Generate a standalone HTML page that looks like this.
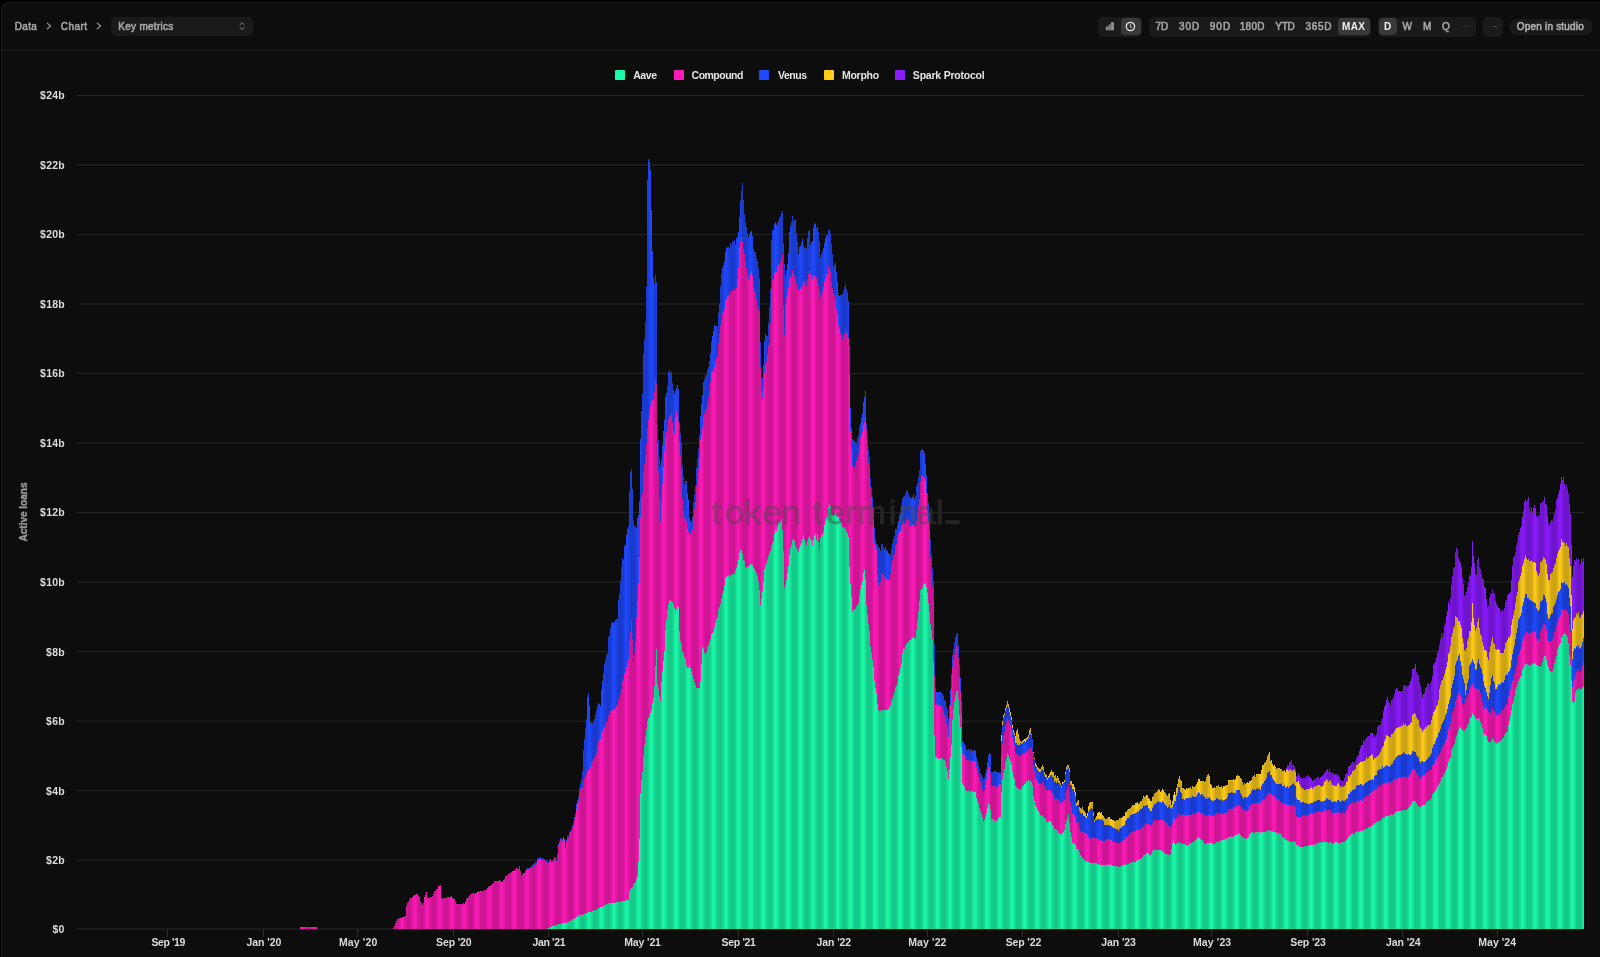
<!DOCTYPE html>
<html lang="en"><head><meta charset="utf-8"><title>Active loans</title>
<style>
html,body{margin:0;padding:0;background:#000;}
body{width:1600px;height:957px;overflow:hidden;position:relative;font-family:"Liberation Sans",sans-serif;}
#root{position:absolute;left:0;top:0;width:1600px;height:957px;will-change:transform;overflow:hidden;}
.panel{position:absolute;left:1px;top:2px;width:1600px;height:960px;background:#0d0d0d;border-top:1px solid #161616;border-left:1px solid #1e1e1e;border-top-left-radius:7px;box-sizing:border-box;}
.hdr{position:absolute;left:2px;top:50px;width:1598px;height:1px;background:#1c1c1c;}
.t{position:absolute;white-space:pre;line-height:20px;font-family:"Liberation Sans",sans-serif;}
.box{position:absolute;background:#1a1a1c;border-radius:5px;top:16.5px;height:20px;}
.sel{position:absolute;background:#393939;border-radius:4px;top:18px;height:16.75px;}
.dots{position:absolute;width:1.7px;height:1.7px;border-radius:1px;}
.lg{position:absolute;top:69.8px;width:10.2px;height:10.2px;border-radius:1px;}
svg text{font-family:"Liberation Sans",sans-serif;}
</style></head><body><div id="root">
<div class="panel"></div>
<div class="hdr"></div>
<svg style="position:absolute;left:44px;top:20px" width="10" height="12" viewBox="0 0 10 12"><path d="M3 2.8 L6.6 6 L3 9.2" fill="none" stroke="#a3a3a3" stroke-width="1.1"/></svg>
<svg style="position:absolute;left:94px;top:20px" width="10" height="12" viewBox="0 0 10 12"><path d="M3 2.8 L6.6 6 L3 9.2" fill="none" stroke="#a3a3a3" stroke-width="1.1"/></svg>
<div class="box" style="left:111px;width:142px;height:19.3px;background:#1a1a1a;"></div>
<svg style="position:absolute;left:237px;top:20px" width="10" height="12" viewBox="0 0 10 12"><path d="M2.7 5 L5.1 2.7 L7.5 5 M2.7 7.2 L5.1 9.5 L7.5 7.2" fill="none" stroke="#8a8a8a" stroke-width="1"/></svg>

<div class="box" style="left:1098px;width:44px;"></div>
<div class="sel" style="left:1121px;width:19.7px;"></div>
<svg style="position:absolute;left:1104px;top:20px" width="12" height="12" viewBox="0 0 12 12"><path d="M1.8 9.8 V6.6 H4.2 V9.8 Z M4.6 9.8 V4.6 H6.6 V9.8 Z M6.9 9.8 V2.8 Q6.9 2 7.7 2 H9.2 Q10 2 10 2.8 V9.8 Z M1.6 9.4 H10.1 V10.3 H1.6 Z" fill="#8c8c8c"/></svg>
<svg style="position:absolute;left:1125.1px;top:20.85px" width="11" height="11" viewBox="0 0 11 11"><circle cx="5.5" cy="5.5" r="4.2" fill="none" stroke="#e6e6e6" stroke-width="1.2"/><path d="M5.5 3 V5.7 L7.2 6.9" fill="none" stroke="#a8a8a8" stroke-width="1.1"/></svg>
<div class="box" style="left:1149px;width:222px;"></div>
<div class="sel" style="left:1338px;width:31.75px;"></div>
<div class="box" style="left:1378px;width:98px;"></div>
<div class="sel" style="left:1379.25px;width:17.75px;"></div>
<div class="box" style="left:1483px;width:19.5px;"></div>
<div class="box" style="left:1509.5px;top:18.7px;width:82.5px;height:16.3px;border-radius:6px;background:#1a1a1a;"></div>
<i class="dots" style="left:1461px;top:25.5px;background:#3a3a3a"></i><i class="dots" style="left:1464.2px;top:25.5px;background:#3a3a3a"></i><i class="dots" style="left:1467.4px;top:25.5px;background:#3a3a3a"></i>
<i class="dots" style="left:1488.5px;top:25.5px;background:#555"></i><i class="dots" style="left:1491.7px;top:25.5px;background:#555"></i><i class="dots" style="left:1494.9px;top:25.5px;background:#555"></i>

<div class="lg" style="left:614.5px;background:#1afcaa;"></div>
<div class="lg" style="left:673.5px;background:#ff1ab8;"></div>
<div class="lg" style="left:759.3px;background:#1f49ff;"></div>
<div class="lg" style="left:823.6px;background:#ffcc1a;"></div>
<div class="lg" style="left:895px;background:#8a1aff;"></div>

<svg style="position:absolute;left:0;top:0" width="1600" height="957" viewBox="0 0 1600 957">
 <defs>
  <linearGradient id="sg" x1="0" x2="1" y1="0" y2="0">
   <stop offset="0" stop-color="#000" stop-opacity="0"/>
   <stop offset="0.06" stop-color="#000" stop-opacity="0.02"/>
   <stop offset="0.36" stop-color="#000" stop-opacity="0.2"/>
   <stop offset="0.70" stop-color="#000" stop-opacity="0.2"/>
   <stop offset="0.95" stop-color="#000" stop-opacity="0.02"/>
   <stop offset="1" stop-color="#000" stop-opacity="0"/>
  </linearGradient>
  <pattern id="stripes" x="601.300" y="0" width="12.449" height="957" patternUnits="userSpaceOnUse">
   <rect x="0" y="0" width="12.449" height="957" fill="url(#sg)"/>
  </pattern>
  <clipPath id="cp"><path d="M299.50 929.0V927.9H300.28V927.3H317.44V928.6H318.22V929.0ZM392.31 929.0V928.9H393.09V927.8H393.87V926.2H394.65V924.5H395.43V922.7H396.21V920.7H396.99V918.7H397.77V918.9H399.33V918.1H400.11V917.7H401.67V917.9H402.45V916.9H403.23V917.1H404.01V916.6H404.79V915.6H405.57V910.9H406.35V906.0H407.13V903.0H407.91V901.7H408.69V901.6H409.47V900.1H410.25V898.2H411.03V897.9H411.81V897.2H412.59V896.0H413.37V895.5H414.15V895.0H414.93V894.7H415.71V894.3H416.49V894.2H417.27V894.0H418.05V895.6H418.83V897.4H419.61V899.2H420.39V900.5H421.17V902.6H421.95V904.5H422.73V902.6H423.51V900.0H424.29V897.2H425.07V894.8H425.85V891.7H426.63V895.7H427.41V898.5H428.19V898.4H428.97V897.7H429.75V897.4H430.53V897.1H431.31V896.9H432.09V896.3H432.87V894.3H433.65V892.9H434.43V891.6H435.21V891.2H435.99V889.3H436.77V889.0H437.55V887.4H438.33V886.2H439.11V885.5H439.89V884.6H440.67V895.7H441.45V898.2H442.23V898.8H443.01V898.3H443.79V898.4H444.57V898.1H445.35V898.0H446.91V897.4H448.47V896.9H449.25V896.8H450.03V897.1H450.81V896.4H451.59V897.1H452.37V898.1H453.14V898.5H453.92V899.1H454.70V900.8H455.48V901.8H456.26V903.6H457.04V904.2H457.82V904.4H458.60V904.9H459.38V904.0H460.16V903.9H460.94V904.2H461.72V904.1H462.50V904.2H463.28V903.4H464.06V903.6H464.84V902.3H465.62V900.1H466.40V899.2H467.18V897.8H467.96V897.0H468.74V896.4H469.52V895.1H470.30V894.2H471.08V894.0H471.86V893.0H472.64V892.7H473.42V892.9H474.20V893.9H474.98V893.4H475.76V893.3H476.54V891.8H477.32V891.6H478.10V891.3H478.88V891.8H479.66V892.0H480.44V891.4H481.22V891.2H482.00V891.4H482.78V890.9H483.56V890.6H484.34V890.4H485.90V890.2H486.68V888.7H487.46V887.7H488.24V887.0H489.02V886.4H489.80V886.0H490.58V884.9H491.36V884.6H492.14V883.7H492.92V883.2H493.70V882.0H494.48V881.0H495.26V880.9H496.04V880.8H497.60V880.3H498.38V880.7H499.16V880.4H499.94V881.2H500.72V881.5H501.50V882.1H502.28V881.6H503.06V879.6H503.84V878.9H504.62V877.5H505.40V876.4H506.18V875.7H506.96V875.0H507.74V874.2H508.52V873.5H509.30V873.1H510.08V872.7H510.86V872.4H511.64V872.2H512.42V871.3H513.20V871.0H513.98V869.7H514.76V870.9H515.54V869.9H516.32V868.4H517.10V869.0H517.88V868.6H518.66V867.1H519.44V865.7H520.22V870.9H521.00V875.5H521.78V875.3H522.56V874.9H523.34V872.6H524.12V873.2H524.90V870.7H525.68V869.8H526.46V868.6H527.24V868.0H528.02V867.6H528.80V867.7H529.58V868.2H530.36V866.6H531.13V866.1H531.91V865.2H532.69V864.9H533.47V863.8H534.25V863.2H535.03V862.1H535.81V861.8H536.59V859.9H537.37V858.7H538.15V858.3H538.93V857.9H539.71V858.0H540.49V857.0H541.27V858.7H542.05V857.8H542.83V858.7H543.61V858.4H544.39V858.6H545.17V860.0H545.95V860.2H546.73V861.1H547.51V860.4H548.29V861.7H549.07V860.2H549.85V858.7H550.63V864.4H551.41V861.7H552.19V860.7H552.97V859.0H553.75V856.9H554.53V855.8H555.31V857.1H556.09V859.5H556.87V853.4H557.65V848.5H558.43V843.9H559.21V841.3H559.99V838.3H560.77V838.1H561.55V839.4H562.33V838.9H563.11V836.8H563.89V838.7H564.67V843.2H565.45V848.2H566.23V839.5H567.01V836.4H567.79V835.7H568.57V834.0H569.35V831.8H570.13V830.0H570.91V829.7H571.69V828.8H572.47V825.0H573.25V822.6H574.03V817.0H574.81V813.4H575.59V809.7H576.37V803.7H577.15V799.6H577.93V796.7H578.71V791.3H579.49V787.8H580.27V782.9H581.05V779.1H581.83V771.2H582.61V760.3H583.39V749.9H584.17V739.2H584.95V727.8H585.73V718.6H586.51V708.3H587.29V697.2H588.07V692.7H588.85V706.3H589.63V719.4H590.41V723.2H591.19V721.7H591.97V723.7H592.75V721.3H593.53V723.1H594.31V718.6H595.09V713.6H595.87V709.6H596.65V706.7H597.43V706.4H598.21V702.8H598.99V703.9H599.77V705.5H600.55V695.9H601.33V689.5H602.11V680.7H602.89V673.1H603.67V669.1H604.45V663.8H605.23V660.2H606.01V655.3H606.79V653.0H607.57V647.0H608.35V637.2H609.12V634.8H609.90V628.2H610.68V626.3H611.46V623.0H612.24V621.8H613.02V623.4H613.80V622.0H614.58V619.9H615.36V619.8H616.14V619.4H616.92V618.5H617.70V612.6H618.48V600.2H619.26V594.3H620.04V581.3H620.82V566.6H621.60V564.6H622.38V557.7H623.16V559.7H623.94V546.2H624.72V544.9H625.50V540.9H626.28V534.5H627.06V528.6H627.84V526.1H628.62V506.1H629.40V491.7H630.18V471.9H630.96V468.5H631.74V488.9H632.52V508.0H633.30V521.1H634.08V526.2H634.86V526.8H635.64V530.7H636.42V527.7H637.20V518.0H637.98V515.1H638.76V500.5H639.54V465.9H640.32V439.2H641.10V410.6H641.88V393.9H642.66V369.9H643.44V353.5H644.22V338.5H645.00V321.8H645.78V285.8H646.56V228.4H647.34V180.3H648.12V159.2H648.90V161.9H649.68V169.3H650.46V170.2H651.24V209.8H652.02V250.9H652.80V278.0H653.58V290.7H654.36V284.3H655.14V274.7H655.92V281.7H656.70V325.5H657.48V425.8H658.26V440.0H659.04V457.0H659.82V465.7H660.60V474.8H661.38V459.6H662.16V445.0H662.94V431.1H663.72V419.7H664.50V406.7H665.28V396.9H666.06V392.6H666.84V385.7H667.62V376.1H668.40V372.4H669.18V370.3H669.96V373.1H670.74V372.4H671.52V375.0H672.30V382.8H673.08V389.7H673.86V394.3H674.64V393.1H675.42V390.6H676.20V388.4H676.98V384.6H677.76V389.1H678.54V406.1H679.32V423.1H680.10V433.4H680.88V442.7H681.66V450.4H682.44V464.8H683.22V477.0H684.00V483.5H684.78V481.2H685.56V482.0H686.34V481.4H687.12V493.3H687.89V500.3H688.67V509.9H689.45V517.5H690.23V522.3H691.01V520.8H691.79V516.6H692.57V512.1H693.35V501.9H694.13V494.1H694.91V486.0H695.69V475.6H696.47V468.3H697.25V458.6H698.03V448.7H698.81V435.5H699.59V426.7H700.37V415.6H701.15V404.4H701.93V395.4H702.71V386.1H703.49V381.9H704.27V378.5H705.05V374.9H705.83V374.6H706.61V372.2H707.39V370.2H708.17V367.1H708.95V360.8H709.73V353.3H710.51V348.2H711.29V342.4H712.07V335.6H712.85V331.2H713.63V324.6H714.41V325.4H715.19V325.8H715.97V326.2H716.75V327.2H717.53V319.1H718.31V313.3H719.09V303.6H719.87V285.7H720.65V275.5H721.43V274.0H722.21V268.3H722.99V265.3H723.77V261.4H724.55V255.2H725.33V252.3H726.11V248.2H726.89V247.2H727.67V249.0H728.45V246.5H729.23V248.2H730.01V243.3H730.79V244.7H731.57V241.3H732.35V241.0H733.13V242.3H733.91V240.3H734.69V243.2H735.47V243.6H736.25V238.1H737.03V237.3H737.81V231.5H738.59V227.4H739.37V216.5H740.15V201.4H740.93V191.1H741.71V179.7H742.49V182.7H743.27V200.4H744.05V214.1H744.83V221.8H745.61V226.1H746.39V226.5H747.17V233.7H747.95V237.5H748.73V233.6H749.51V230.9H750.29V231.9H751.07V230.8H751.85V235.6H752.63V243.0H753.41V248.9H754.19V251.9H755.75V258.2H756.53V256.7H757.31V260.9H758.09V268.0H758.87V277.5H759.65V290.9H760.43V342.1H761.21V377.4H761.99V377.6H762.77V364.7H763.55V344.4H764.33V340.9H765.10V334.4H765.88V336.1H766.66V333.0H767.44V335.7H768.22V322.6H769.00V306.8H769.78V288.6H770.56V269.8H771.34V239.5H772.12V229.5H772.90V229.6H773.68V227.2H774.46V223.9H775.24V222.4H776.02V224.8H776.80V222.5H777.58V222.0H778.36V221.1H779.14V218.2H779.92V216.3H780.70V214.2H781.48V212.9H782.26V210.7H783.04V243.1H783.82V263.9H784.60V279.9H785.38V276.3H786.16V269.7H786.94V263.7H787.72V253.3H788.50V245.6H789.28V232.3H790.06V226.2H790.84V221.9H791.62V217.6H792.40V215.8H793.18V222.3H793.96V220.0H794.74V220.1H795.52V228.1H796.30V233.0H797.08V242.2H797.86V254.2H798.64V250.0H799.42V246.7H800.20V245.6H800.98V241.9H801.76V239.2H802.54V243.0H803.32V245.1H804.10V247.5H804.88V247.4H805.66V247.0H806.44V249.0H807.22V238.2H808.00V231.2H808.78V229.7H809.56V236.6H810.34V245.3H811.12V242.1H811.90V240.8H812.68V234.6H813.46V227.6H814.24V222.7H815.02V224.3H815.80V228.3H816.58V229.3H817.36V226.9H818.14V232.3H818.92V241.6H819.70V251.3H820.48V257.9H821.26V254.2H822.04V251.1H822.82V247.9H823.60V242.6H824.38V243.4H825.16V238.4H825.94V234.7H826.72V235.0H827.50V233.3H828.28V230.1H829.06V230.4H829.84V234.3H830.62V239.2H831.40V243.5H832.18V254.0H832.96V265.6H833.74V265.2H834.52V265.8H835.30V262.9H836.08V272.4H836.86V282.3H837.64V295.3H838.42V295.1H839.20V295.6H839.98V294.5H840.76V294.9H841.54V292.9H842.32V294.4H843.09V291.3H843.87V287.4H844.65V282.9H845.43V283.6H846.21V288.7H846.99V291.5H847.77V301.3H848.55V319.3H849.33V346.1H850.11V408.4H850.89V427.7H851.67V441.3H852.45V438.9H853.23V440.2H854.01V441.1H854.79V442.3H855.57V441.7H856.35V442.9H857.13V438.4H857.91V435.3H858.69V430.1H859.47V427.1H860.25V422.9H861.03V418.0H861.81V413.0H862.59V406.0H863.37V402.3H864.15V397.3H864.93V391.3H865.71V406.0H866.49V424.0H867.27V438.3H868.05V449.9H868.83V457.3H869.61V469.4H870.39V477.5H871.17V487.0H871.95V496.8H872.73V508.3H873.51V517.8H874.29V528.2H875.07V539.1H875.85V543.8H876.63V542.9H877.41V545.3H878.19V546.8H878.97V548.1H879.75V551.3H880.53V545.4H881.31V544.1H882.09V543.6H882.87V546.5H883.65V546.4H884.43V548.5H885.21V547.2H885.99V550.3H886.77V551.2H887.55V549.5H888.33V552.5H889.11V553.7H889.89V555.1H890.67V554.8H891.45V549.2H892.23V543.0H893.01V538.5H893.79V536.2H894.57V533.1H895.35V529.0H896.13V528.6H896.91V524.8H897.69V528.7H898.47V520.6H899.25V516.4H900.03V513.2H900.81V505.9H901.59V500.7H902.37V498.7H903.15V496.9H903.93V495.9H904.71V491.8H905.49V492.5H906.27V491.0H907.05V490.3H907.83V493.5H908.61V495.2H909.39V495.7H910.17V498.1H911.73V497.2H912.51V496.4H913.29V495.3H914.07V499.0H914.85V496.1H915.63V492.1H916.41V486.3H917.19V482.6H917.97V476.5H918.75V469.5H919.53V459.2H920.31V450.6H921.08V449.4H921.86V449.7H922.64V449.6H923.42V449.7H924.20V453.3H924.98V463.6H925.76V476.2H926.54V483.5H927.32V492.8H928.10V503.2H928.88V511.8H929.66V524.0H930.44V538.7H931.22V554.2H932.00V566.8H932.78V581.2H933.56V609.4H934.34V644.1H935.12V688.1H935.90V691.7H936.68V693.0H938.24V692.3H939.02V691.9H939.80V692.4H940.58V692.2H941.36V692.5H942.14V693.6H942.92V696.4H943.70V697.9H944.48V699.8H945.26V701.4H946.04V706.8H946.82V709.7H947.60V713.8H948.38V717.6H949.16V704.6H949.94V690.2H950.72V674.1H951.50V664.2H952.28V654.8H953.06V648.7H953.84V642.2H954.62V640.7H955.40V636.6H956.18V633.7H956.96V633.2H957.74V645.2H958.52V656.2H959.30V664.9H960.08V678.3H960.86V701.3H961.64V721.2H962.42V740.7H963.20V742.1H963.98V743.8H964.76V745.8H965.54V747.3H966.32V749.5H967.88V748.7H968.66V749.6H969.44V749.9H970.22V751.1H971.00V749.0H971.78V750.8H972.56V751.0H973.34V750.5H974.12V750.1H974.90V751.4H975.68V754.4H976.46V756.7H977.24V760.6H978.02V764.8H978.80V768.7H979.58V771.3H980.36V772.8H981.14V774.7H981.92V777.4H982.70V779.8H984.26V778.2H985.04V773.9H985.82V769.4H986.60V763.0H987.38V761.8H988.16V755.8H988.94V752.6H989.72V754.2H990.50V762.9H991.28V771.5H992.06V772.0H993.62V772.2H994.40V771.4H995.18V771.2H995.96V772.2H996.74V773.2H997.52V773.5H998.30V772.1H999.07V772.8H999.85V773.4H1000.63V759.8H1001.41V735.1H1002.19V721.4H1002.97V715.4H1003.75V712.6H1004.53V710.8H1005.31V707.8H1006.09V704.6H1006.87V701.4H1007.65V700.1H1008.43V703.9H1009.21V708.3H1009.99V712.0H1010.77V716.8H1011.55V721.3H1012.33V725.3H1013.11V730.4H1013.89V732.9H1014.67V738.4H1015.45V736.3H1016.23V731.0H1017.01V729.2H1017.79V734.0H1018.57V738.8H1019.35V739.1H1020.13V740.5H1020.91V741.8H1021.69V739.1H1022.47V740.5H1023.25V739.9H1024.03V738.8H1024.81V739.1H1025.59V738.9H1026.37V737.7H1027.15V736.9H1027.93V734.6H1028.71V732.1H1029.49V729.9H1030.27V728.2H1031.05V733.8H1031.83V738.9H1032.61V745.8H1033.39V752.0H1034.17V757.5H1034.95V763.3H1035.73V764.7H1036.51V765.6H1037.29V766.8H1038.07V768.1H1038.85V768.7H1039.63V769.8H1040.41V768.5H1041.19V766.7H1041.97V764.9H1042.75V767.0H1043.53V768.0H1044.31V771.7H1045.09V773.5H1045.87V775.3H1046.65V777.8H1047.43V778.2H1048.21V775.8H1048.99V774.1H1049.77V771.5H1050.55V770.3H1051.33V770.2H1052.11V771.9H1052.89V772.3H1053.67V773.6H1054.45V775.9H1055.23V775.4H1056.01V777.7H1056.79V776.3H1057.57V778.1H1059.13V780.8H1059.91V783.3H1060.69V784.3H1061.47V786.1H1062.25V782.4H1063.03V781.8H1063.81V779.7H1064.59V777.2H1065.37V771.5H1066.15V766.8H1066.93V765.0H1067.71V762.8H1068.49V765.2H1069.27V768.3H1070.05V781.4H1070.83V780.6H1071.61V781.7H1072.39V784.2H1073.17V784.4H1073.95V786.6H1074.73V792.0H1075.51V800.1H1076.29V802.5H1077.07V800.8H1077.84V799.7H1078.62V801.2H1079.40V806.9H1080.18V808.4H1080.96V809.4H1081.74V807.1H1082.52V807.3H1083.30V809.7H1084.08V810.8H1084.86V812.5H1085.64V814.0H1086.42V815.7H1087.20V812.6H1087.98V805.6H1088.76V803.2H1089.54V801.5H1090.32V802.4H1091.10V801.7H1091.88V801.8H1092.66V803.9H1093.44V811.7H1094.22V820.3H1095.00V817.6H1095.78V816.1H1096.56V814.0H1097.34V813.4H1098.12V812.3H1098.90V811.6H1099.68V811.8H1100.46V813.4H1101.24V812.2H1102.02V814.8H1102.80V815.8H1103.58V817.7H1104.36V818.4H1105.14V818.9H1105.92V818.5H1106.70V817.9H1107.48V817.8H1108.26V817.4H1109.04V816.6H1109.82V818.9H1110.60V816.9H1111.38V819.1H1112.16V820.2H1112.94V820.3H1113.72V820.5H1115.28V821.1H1116.06V820.1H1116.84V819.8H1117.62V818.5H1118.40V819.9H1119.18V818.3H1119.96V817.9H1120.74V818.2H1121.52V817.8H1122.30V816.5H1123.08V816.1H1123.86V815.9H1124.64V813.1H1125.42V812.1H1126.20V812.2H1126.98V809.5H1127.76V809.4H1128.54V809.8H1129.32V809.4H1130.10V807.8H1130.88V807.4H1131.66V807.5H1132.44V804.9H1133.22V805.1H1134.00V805.2H1134.78V803.2H1135.56V803.4H1137.12V801.7H1137.90V804.3H1138.68V801.8H1139.46V802.5H1140.24V800.6H1141.80V799.0H1142.58V798.2H1143.36V796.2H1144.14V797.3H1144.92V795.8H1145.70V795.6H1146.48V794.8H1147.26V795.2H1148.04V797.7H1148.82V799.2H1149.60V799.6H1150.38V800.5H1151.16V801.0H1151.94V797.2H1152.72V795.5H1153.50V792.7H1154.28V793.2H1155.06V793.0H1155.83V791.5H1156.61V791.2H1157.39V790.6H1158.17V789.0H1158.95V790.1H1159.73V791.6H1160.51V791.3H1161.29V791.1H1162.07V789.4H1162.85V789.8H1163.63V789.2H1164.41V791.7H1165.19V793.1H1165.97V794.8H1166.75V796.2H1167.53V795.3H1168.31V794.2H1169.09V792.6H1169.87V799.9H1170.65V803.8H1171.43V804.8H1172.21V800.5H1172.99V795.2H1173.77V792.3H1174.55V796.8H1175.33V794.7H1176.11V788.2H1176.89V784.1H1177.67V782.4H1178.45V778.6H1179.23V776.2H1180.01V780.4H1180.79V781.0H1181.57V785.3H1182.35V788.0H1183.13V788.2H1183.91V789.3H1184.69V789.5H1185.47V790.0H1186.25V788.1H1187.03V788.5H1187.81V788.0H1188.59V788.2H1190.15V787.2H1190.93V789.1H1191.71V788.5H1192.49V785.7H1193.27V787.0H1194.05V787.3H1194.83V786.1H1195.61V785.1H1196.39V783.9H1197.17V782.4H1197.95V779.0H1199.51V778.7H1200.29V781.1H1201.07V780.8H1202.63V781.6H1203.41V781.4H1204.19V781.5H1204.97V781.0H1205.75V777.2H1206.53V777.5H1207.31V774.5H1208.09V774.1H1208.87V775.7H1209.65V778.2H1210.43V783.7H1211.21V784.9H1211.99V788.0H1212.77V788.3H1213.55V785.5H1214.33V786.6H1215.11V787.6H1215.89V785.9H1216.67V784.7H1217.45V785.7H1218.23V785.1H1219.01V787.2H1219.79V786.6H1220.57V788.2H1221.35V786.1H1222.13V788.2H1222.91V786.4H1223.69V785.1H1224.47V785.6H1225.25V785.8H1226.03V785.1H1226.81V784.5H1227.59V782.2H1228.37V780.4H1229.15V780.3H1229.93V780.4H1230.71V780.9H1231.49V780.0H1232.27V780.2H1233.05V778.5H1233.82V780.3H1234.60V778.5H1235.38V778.6H1236.16V775.9H1236.94V775.2H1237.72V775.5H1238.50V775.4H1239.28V775.7H1240.06V777.6H1240.84V779.1H1241.62V780.9H1242.40V781.9H1243.18V784.9H1243.96V782.9H1244.74V783.9H1245.52V781.7H1246.30V783.2H1247.08V782.4H1247.86V783.4H1248.64V779.5H1249.42V780.8H1250.20V781.2H1250.98V779.7H1251.76V776.8H1252.54V775.6H1253.32V776.0H1254.10V775.3H1254.88V777.0H1255.66V775.4H1256.44V774.2H1257.22V774.3H1258.00V774.4H1258.78V773.6H1259.56V773.4H1260.34V773.6H1261.12V770.4H1261.90V765.4H1262.68V765.8H1263.46V764.9H1264.24V762.9H1265.02V762.1H1265.80V759.7H1266.58V759.6H1267.36V756.0H1268.14V753.6H1268.92V752.1H1269.70V755.8H1270.48V760.6H1271.26V760.4H1272.04V764.3H1272.82V765.9H1273.60V766.2H1274.38V765.2H1275.16V767.4H1275.94V768.6H1276.72V767.9H1277.50V767.6H1278.28V768.3H1279.06V767.6H1279.84V769.4H1280.62V769.7H1281.40V768.8H1282.18V770.8H1282.96V770.6H1283.74V769.5H1284.52V769.6H1285.30V771.9H1286.08V767.5H1286.86V765.3H1287.64V761.7H1288.42V766.4H1289.20V762.3H1289.98V761.6H1290.76V759.8H1291.54V761.5H1292.32V765.0H1293.10V764.8H1293.88V766.8H1294.66V768.6H1295.44V769.4H1296.22V776.3H1297.00V776.5H1297.78V773.4H1298.56V776.6H1299.34V776.3H1300.12V777.7H1300.90V780.1H1301.68V778.5H1302.46V778.1H1303.24V777.9H1304.02V778.2H1304.80V779.3H1305.58V777.3H1306.36V776.0H1307.14V777.0H1307.92V775.0H1308.70V777.5H1309.48V777.3H1310.26V777.8H1311.03V778.5H1311.81V781.3H1312.59V779.7H1313.37V779.8H1314.15V779.6H1314.93V779.1H1315.71V776.9H1316.49V778.2H1317.27V776.9H1318.05V777.3H1318.83V779.0H1319.61V779.8H1320.39V777.3H1321.17V777.1H1321.95V775.5H1322.73V774.9H1323.51V773.8H1324.29V772.6H1325.07V772.2H1325.85V770.3H1326.63V772.4H1327.41V768.9H1328.19V771.7H1328.97V769.1H1329.75V771.6H1330.53V769.3H1331.31V772.8H1332.09V773.7H1332.87V773.1H1334.43V775.4H1335.21V774.0H1335.99V774.1H1336.77V776.0H1337.55V773.7H1338.33V774.7H1339.11V777.3H1339.89V779.6H1340.67V781.2H1341.45V781.3H1342.23V780.8H1343.01V781.4H1343.79V777.6H1344.57V775.9H1345.35V774.6H1346.13V773.6H1346.91V772.9H1347.69V770.7H1348.47V767.3H1349.25V766.2H1350.03V765.0H1350.81V762.8H1351.59V763.0H1352.37V762.3H1353.15V761.9H1353.93V763.7H1354.71V759.3H1355.49V760.6H1356.27V758.2H1357.05V755.7H1357.83V754.8H1358.61V753.2H1359.39V751.3H1360.17V748.1H1360.95V744.7H1361.73V745.0H1362.51V741.7H1363.29V739.9H1364.07V742.4H1364.85V739.2H1365.63V738.8H1366.41V738.0H1367.19V737.0H1367.97V736.4H1368.75V736.3H1369.53V733.9H1370.31V732.7H1371.87V733.4H1372.65V736.3H1373.43V738.3H1374.21V735.4H1374.99V737.2H1375.77V734.3H1376.55V730.4H1377.33V727.0H1378.11V725.1H1378.89V724.6H1379.67V722.4H1380.45V725.1H1381.23V720.5H1382.01V717.7H1382.79V710.9H1383.57V709.9H1384.35V707.3H1385.13V704.7H1385.91V700.3H1386.69V704.1H1387.47V697.1H1388.25V701.8H1389.03V703.3H1389.80V705.9H1390.58V704.8H1391.36V700.0H1392.14V699.6H1392.92V697.1H1393.70V696.0H1394.48V693.7H1395.26V689.5H1396.04V688.2H1396.82V688.6H1397.60V690.0H1398.38V691.7H1399.16V690.7H1399.94V692.3H1400.72V690.9H1401.50V689.2H1402.28V690.7H1403.06V685.9H1403.84V684.5H1404.62V685.2H1405.40V684.6H1406.18V686.5H1406.96V685.8H1407.74V685.9H1408.52V684.4H1409.30V684.0H1410.08V681.2H1410.86V678.0H1411.64V673.0H1412.42V669.1H1413.20V669.0H1413.98V667.3H1414.76V664.0H1415.54V671.7H1416.32V671.9H1417.10V675.1H1417.88V674.7H1418.66V680.6H1419.44V681.5H1420.22V686.2H1421.00V692.8H1421.78V697.7H1422.56V697.4H1423.34V693.9H1424.12V692.8H1424.90V688.4H1425.68V687.3H1426.46V686.8H1427.24V683.8H1428.02V682.9H1428.80V688.8H1429.58V685.7H1430.36V684.1H1431.14V680.5H1431.92V675.5H1432.70V667.9H1433.48V665.1H1434.26V663.1H1435.04V661.7H1435.82V657.7H1436.60V658.3H1437.38V652.8H1438.16V649.6H1438.94V645.4H1439.72V638.5H1440.50V632.4H1441.28V632.6H1442.06V637.0H1442.84V633.4H1443.62V632.9H1444.40V626.3H1445.18V623.3H1445.96V615.9H1446.74V611.1H1447.52V609.8H1448.30V602.0H1449.08V605.0H1449.86V598.0H1450.64V589.7H1451.42V585.3H1452.20V576.1H1452.98V568.3H1453.76V566.7H1454.54V558.3H1455.32V552.0H1456.10V548.3H1456.88V549.9H1457.66V558.9H1458.44V557.6H1459.22V561.4H1460.00V563.2H1460.78V566.5H1461.56V570.9H1462.34V578.1H1463.12V583.6H1463.90V595.6H1464.68V595.8H1465.46V594.8H1466.24V592.2H1467.02V587.3H1467.79V581.5H1468.57V579.3H1469.35V575.4H1470.13V576.0H1470.91V566.8H1471.69V555.7H1472.47V540.8H1473.25V556.1H1474.03V562.7H1474.81V573.6H1475.59V573.4H1476.37V574.6H1477.15V560.4H1477.93V557.3H1478.71V555.7H1479.49V566.5H1480.27V568.6H1481.05V573.8H1481.83V579.2H1482.61V577.8H1483.39V579.3H1484.17V587.4H1484.95V587.6H1485.73V598.7H1486.51V603.5H1487.29V607.9H1488.07V606.4H1488.85V598.4H1489.63V599.7H1490.41V593.6H1491.19V594.1H1491.97V588.6H1492.75V593.8H1493.53V595.6H1494.31V593.1H1495.09V601.1H1495.87V604.2H1496.65V605.7H1497.43V606.0H1498.21V607.9H1498.99V607.5H1499.77V611.1H1500.55V607.1H1501.33V611.7H1502.11V610.1H1502.89V610.8H1503.67V608.8H1504.45V608.3H1505.23V601.8H1506.01V599.5H1506.79V594.5H1507.57V594.2H1508.35V593.5H1509.13V593.8H1509.91V592.2H1510.69V585.7H1511.47V579.9H1512.25V566.4H1513.03V557.1H1513.81V555.6H1514.59V551.5H1515.37V551.6H1516.15V546.0H1516.93V542.4H1517.71V541.8H1518.49V535.3H1519.27V532.1H1520.05V527.6H1520.83V525.8H1521.61V517.6H1522.39V517.0H1523.17V510.6H1523.95V502.4H1524.73V498.7H1525.51V500.9H1526.29V501.5H1527.07V499.8H1527.85V497.2H1528.63V504.0H1529.41V508.0H1530.19V511.2H1530.97V507.1H1531.75V512.8H1532.53V513.0H1533.31V508.2H1534.09V505.1H1534.87V508.3H1535.65V509.3H1536.43V515.7H1537.21V518.2H1537.99V515.6H1538.77V514.5H1539.55V510.9H1540.33V503.2H1541.11V502.5H1541.89V501.8H1542.67V502.5H1543.45V501.1H1544.23V497.2H1545.01V503.9H1545.78V505.1H1546.56V514.0H1547.34V516.1H1548.12V523.9H1548.90V525.6H1549.68V521.0H1550.46V522.3H1551.24V520.3H1552.02V521.1H1552.80V516.7H1553.58V514.8H1554.36V513.3H1555.14V508.9H1555.92V500.0H1556.70V505.2H1557.48V498.3H1558.26V493.7H1559.04V489.7H1559.82V483.9H1560.60V480.7H1561.38V477.2H1562.16V480.1H1562.94V477.1H1563.72V483.9H1564.50V487.5H1565.28V486.8H1566.06V485.1H1566.84V490.2H1567.62V491.6H1568.40V494.2H1569.18V503.9H1569.96V513.8H1570.74V545.3H1571.52V589.2H1572.30V577.0H1573.08V566.0H1573.86V559.9H1574.64V562.0H1575.42V560.9H1576.20V557.9H1576.98V560.1H1577.76V558.8H1578.54V562.1H1579.32V565.8H1580.10V563.9H1580.88V559.4H1581.66V564.2H1582.44V562.2H1583.22V558.1H1584.00V929.0Z"/></clipPath>
 </defs>
 <g fill="#242427"><rect x="76.5" y="928.40" width="1507.5" height="1.2"/><rect x="76.5" y="859.63" width="1507.5" height="1.2"/><rect x="76.5" y="790.10" width="1507.5" height="1.2"/><rect x="76.5" y="720.57" width="1507.5" height="1.2"/><rect x="76.5" y="651.04" width="1507.5" height="1.2"/><rect x="76.5" y="581.51" width="1507.5" height="1.2"/><rect x="76.5" y="511.98" width="1507.5" height="1.2"/><rect x="76.5" y="442.45" width="1507.5" height="1.2"/><rect x="76.5" y="372.92" width="1507.5" height="1.2"/><rect x="76.5" y="303.39" width="1507.5" height="1.2"/><rect x="76.5" y="233.86" width="1507.5" height="1.2"/><rect x="76.5" y="164.33" width="1507.5" height="1.2"/><rect x="76.5" y="94.80" width="1507.5" height="1.2"/></g>
 <g stroke="#2e2e2e" stroke-width="1" shape-rendering="crispEdges"><line x1="167.5" x2="167.5" y1="929.5" y2="937"/><line x1="263.5" x2="263.5" y1="929.5" y2="937"/><line x1="357.5" x2="357.5" y1="929.5" y2="937"/><line x1="453.5" x2="453.5" y1="929.5" y2="937"/><line x1="548.5" x2="548.5" y1="929.5" y2="937"/><line x1="642.5" x2="642.5" y1="929.5" y2="937"/><line x1="738.5" x2="738.5" y1="929.5" y2="937"/><line x1="833.5" x2="833.5" y1="929.5" y2="937"/><line x1="927.5" x2="927.5" y1="929.5" y2="937"/><line x1="1022.5" x2="1022.5" y1="929.5" y2="937"/><line x1="1118.5" x2="1118.5" y1="929.5" y2="937"/><line x1="1211.5" x2="1211.5" y1="929.5" y2="937"/><line x1="1307.5" x2="1307.5" y1="929.5" y2="937"/><line x1="1402.5" x2="1402.5" y1="929.5" y2="937"/><line x1="1497.5" x2="1497.5" y1="929.5" y2="937"/></g>
 <text x="711.7 724.9 744.3 762.2 781.8 795.6 812.6 826.0 845.2 857.5 888.8 898.4 916.4 936.0" y="523.8" font-size="34" font-weight="400" stroke-width="0.9" fill="#252525" stroke="#252525">token terminal</text><rect x="945" y="520.3" width="14.5" height="3.7" fill="#252525"/>
 <g shape-rendering="crispEdges"><path d="M299.50 929.0V927.9H300.28V927.3H317.44V928.6H318.22V929.0ZM392.31 929.0V928.9H393.09V927.8H393.87V926.2H394.65V924.5H395.43V922.7H396.21V920.7H396.99V918.7H397.77V918.9H399.33V918.1H400.11V917.7H401.67V917.9H402.45V916.9H403.23V917.1H404.01V916.6H404.79V915.6H405.57V910.9H406.35V906.0H407.13V903.0H407.91V901.7H408.69V901.6H409.47V900.1H410.25V898.2H411.03V897.9H411.81V897.2H412.59V896.0H413.37V895.5H414.15V895.0H414.93V894.7H415.71V894.3H416.49V894.2H417.27V894.0H418.05V895.6H418.83V897.4H419.61V899.2H420.39V900.5H421.17V902.6H421.95V904.5H422.73V902.6H423.51V900.0H424.29V897.2H425.07V894.8H425.85V891.7H426.63V895.7H427.41V898.5H428.19V898.4H428.97V897.7H429.75V897.4H430.53V897.1H431.31V896.9H432.09V896.3H432.87V894.3H433.65V892.9H434.43V891.6H435.21V891.2H435.99V889.3H436.77V889.0H437.55V887.4H438.33V886.2H439.11V885.5H439.89V884.6H440.67V895.7H441.45V898.2H442.23V898.8H443.01V898.3H443.79V898.4H444.57V898.1H445.35V898.0H446.91V897.4H448.47V896.9H449.25V896.8H450.03V897.1H450.81V896.4H451.59V897.1H452.37V898.1H453.14V898.5H453.92V899.1H454.70V900.8H455.48V901.8H456.26V903.6H457.04V904.2H457.82V904.4H458.60V904.9H459.38V904.0H460.16V903.9H460.94V904.2H461.72V904.1H462.50V904.2H463.28V903.4H464.06V903.6H464.84V902.3H465.62V900.1H466.40V899.2H467.18V897.8H467.96V897.0H468.74V896.4H469.52V895.1H470.30V894.2H471.08V894.0H471.86V893.0H472.64V892.7H473.42V892.9H474.20V893.9H474.98V893.4H475.76V893.3H476.54V891.8H477.32V891.6H478.10V891.3H478.88V891.8H479.66V892.0H480.44V891.4H481.22V891.2H482.00V891.4H482.78V890.9H483.56V890.6H484.34V890.4H485.90V890.2H486.68V888.7H487.46V887.7H488.24V887.0H489.02V886.4H489.80V886.0H490.58V884.9H491.36V884.6H492.14V883.7H492.92V883.2H493.70V882.0H494.48V881.0H495.26V880.9H496.04V880.8H497.60V880.3H498.38V880.7H499.16V880.4H499.94V881.2H500.72V881.5H501.50V882.1H502.28V881.6H503.06V879.6H503.84V878.9H504.62V877.5H505.40V876.4H506.18V875.7H506.96V875.0H507.74V874.2H508.52V873.5H509.30V873.1H510.08V872.7H510.86V872.4H511.64V872.2H512.42V871.3H513.20V871.0H513.98V869.7H514.76V870.9H515.54V869.9H516.32V868.4H517.10V869.0H517.88V868.6H518.66V867.1H519.44V865.7H520.22V870.9H521.00V875.5H521.78V875.3H522.56V874.9H523.34V872.6H524.12V873.2H524.90V870.7H525.68V869.8H526.46V868.6H527.24V868.0H528.02V867.6H528.80V867.7H529.58V868.2H530.36V866.6H531.13V866.1H531.91V865.2H532.69V864.9H533.47V863.8H534.25V863.2H535.03V862.1H535.81V861.8H536.59V859.9H537.37V858.7H538.15V858.3H538.93V857.9H539.71V858.0H540.49V857.0H541.27V858.7H542.05V857.8H542.83V858.7H543.61V858.4H544.39V858.6H545.17V860.0H545.95V860.2H546.73V861.1H547.51V860.4H548.29V861.7H549.07V860.2H549.85V858.7H550.63V864.4H551.41V861.7H552.19V860.7H552.97V859.0H553.75V856.9H554.53V855.8H555.31V857.1H556.09V859.5H556.87V853.4H557.65V848.5H558.43V843.9H559.21V841.3H559.99V838.3H560.77V838.1H561.55V839.4H562.33V838.9H563.11V836.8H563.89V838.7H564.67V843.2H565.45V848.2H566.23V839.5H567.01V836.4H567.79V835.7H568.57V834.0H569.35V831.8H570.13V830.0H570.91V829.7H571.69V828.8H572.47V825.0H573.25V822.6H574.03V817.0H574.81V813.4H575.59V809.7H576.37V803.7H577.15V799.6H577.93V796.7H578.71V791.3H579.49V787.8H580.27V782.9H581.05V779.1H581.83V771.2H582.61V760.3H583.39V749.9H584.17V739.2H584.95V727.8H585.73V718.6H586.51V708.3H587.29V697.2H588.07V692.7H588.85V706.3H589.63V719.4H590.41V723.2H591.19V721.7H591.97V723.7H592.75V721.3H593.53V723.1H594.31V718.6H595.09V713.6H595.87V709.6H596.65V706.7H597.43V706.4H598.21V702.8H598.99V703.9H599.77V705.5H600.55V695.9H601.33V689.5H602.11V680.7H602.89V673.1H603.67V669.1H604.45V663.8H605.23V660.2H606.01V655.3H606.79V653.0H607.57V647.0H608.35V637.2H609.12V634.8H609.90V628.2H610.68V626.3H611.46V623.0H612.24V621.8H613.02V623.4H613.80V622.0H614.58V619.9H615.36V619.8H616.14V619.4H616.92V618.5H617.70V612.6H618.48V600.2H619.26V594.3H620.04V581.3H620.82V566.6H621.60V564.6H622.38V557.7H623.16V559.7H623.94V546.2H624.72V544.9H625.50V540.9H626.28V534.5H627.06V528.6H627.84V526.1H628.62V506.1H629.40V491.7H630.18V471.9H630.96V468.5H631.74V488.9H632.52V508.0H633.30V521.1H634.08V526.2H634.86V526.8H635.64V530.7H636.42V527.7H637.20V518.0H637.98V515.1H638.76V500.5H639.54V465.9H640.32V439.2H641.10V410.6H641.88V393.9H642.66V369.9H643.44V353.5H644.22V338.5H645.00V321.8H645.78V285.8H646.56V228.4H647.34V180.3H648.12V159.2H648.90V161.9H649.68V169.3H650.46V170.2H651.24V209.8H652.02V250.9H652.80V278.0H653.58V290.7H654.36V284.3H655.14V274.7H655.92V281.7H656.70V325.5H657.48V425.8H658.26V440.0H659.04V457.0H659.82V465.7H660.60V474.8H661.38V459.6H662.16V445.0H662.94V431.1H663.72V419.7H664.50V406.7H665.28V396.9H666.06V392.6H666.84V385.7H667.62V376.1H668.40V372.4H669.18V370.3H669.96V373.1H670.74V372.4H671.52V375.0H672.30V382.8H673.08V389.7H673.86V394.3H674.64V393.1H675.42V390.6H676.20V388.4H676.98V384.6H677.76V389.1H678.54V406.1H679.32V423.1H680.10V433.4H680.88V442.7H681.66V450.4H682.44V464.8H683.22V477.0H684.00V483.5H684.78V481.2H685.56V482.0H686.34V481.4H687.12V493.3H687.89V500.3H688.67V509.9H689.45V517.5H690.23V522.3H691.01V520.8H691.79V516.6H692.57V512.1H693.35V501.9H694.13V494.1H694.91V486.0H695.69V475.6H696.47V468.3H697.25V458.6H698.03V448.7H698.81V435.5H699.59V426.7H700.37V415.6H701.15V404.4H701.93V395.4H702.71V386.1H703.49V381.9H704.27V378.5H705.05V374.9H705.83V374.6H706.61V372.2H707.39V370.2H708.17V367.1H708.95V360.8H709.73V353.3H710.51V348.2H711.29V342.4H712.07V335.6H712.85V331.2H713.63V324.6H714.41V325.4H715.19V325.8H715.97V326.2H716.75V327.2H717.53V319.1H718.31V313.3H719.09V303.6H719.87V285.7H720.65V275.5H721.43V274.0H722.21V268.3H722.99V265.3H723.77V261.4H724.55V255.2H725.33V252.3H726.11V248.2H726.89V247.2H727.67V249.0H728.45V246.5H729.23V248.2H730.01V243.3H730.79V244.7H731.57V241.3H732.35V241.0H733.13V242.3H733.91V240.3H734.69V243.2H735.47V243.6H736.25V238.1H737.03V237.3H737.81V231.5H738.59V227.4H739.37V216.5H740.15V201.4H740.93V191.1H741.71V179.7H742.49V182.7H743.27V200.4H744.05V214.1H744.83V221.8H745.61V226.1H746.39V226.5H747.17V233.7H747.95V237.5H748.73V233.6H749.51V230.9H750.29V231.9H751.07V230.8H751.85V235.6H752.63V243.0H753.41V248.9H754.19V251.9H755.75V258.2H756.53V256.7H757.31V260.9H758.09V268.0H758.87V277.5H759.65V290.9H760.43V342.1H761.21V377.4H761.99V377.6H762.77V364.7H763.55V344.4H764.33V340.9H765.10V334.4H765.88V336.1H766.66V333.0H767.44V335.7H768.22V322.6H769.00V306.8H769.78V288.6H770.56V269.8H771.34V239.5H772.12V229.5H772.90V229.6H773.68V227.2H774.46V223.9H775.24V222.4H776.02V224.8H776.80V222.5H777.58V222.0H778.36V221.1H779.14V218.2H779.92V216.3H780.70V214.2H781.48V212.9H782.26V210.7H783.04V243.1H783.82V263.9H784.60V279.9H785.38V276.3H786.16V269.7H786.94V263.7H787.72V253.3H788.50V245.6H789.28V232.3H790.06V226.2H790.84V221.9H791.62V217.6H792.40V215.8H793.18V222.3H793.96V220.0H794.74V220.1H795.52V228.1H796.30V233.0H797.08V242.2H797.86V254.2H798.64V250.0H799.42V246.7H800.20V245.6H800.98V241.9H801.76V239.2H802.54V243.0H803.32V245.1H804.10V247.5H804.88V247.4H805.66V247.0H806.44V249.0H807.22V238.2H808.00V231.2H808.78V229.7H809.56V236.6H810.34V245.3H811.12V242.1H811.90V240.8H812.68V234.6H813.46V227.6H814.24V222.7H815.02V224.3H815.80V228.3H816.58V229.3H817.36V226.9H818.14V232.3H818.92V241.6H819.70V251.3H820.48V257.9H821.26V254.2H822.04V251.1H822.82V247.9H823.60V242.6H824.38V243.4H825.16V238.4H825.94V234.7H826.72V235.0H827.50V233.3H828.28V230.1H829.06V230.4H829.84V234.3H830.62V239.2H831.40V243.5H832.18V254.0H832.96V265.6H833.74V265.2H834.52V265.8H835.30V262.9H836.08V272.4H836.86V282.3H837.64V295.3H838.42V295.1H839.20V295.6H839.98V294.5H840.76V294.9H841.54V292.9H842.32V294.4H843.09V291.3H843.87V287.4H844.65V282.9H845.43V283.6H846.21V288.7H846.99V291.5H847.77V301.3H848.55V319.3H849.33V346.1H850.11V408.4H850.89V427.7H851.67V441.3H852.45V438.9H853.23V440.2H854.01V441.1H854.79V442.3H855.57V441.7H856.35V442.9H857.13V438.4H857.91V435.3H858.69V430.1H859.47V427.1H860.25V422.9H861.03V418.0H861.81V413.0H862.59V406.0H863.37V402.3H864.15V397.3H864.93V391.3H865.71V406.0H866.49V424.0H867.27V438.3H868.05V449.9H868.83V457.3H869.61V469.4H870.39V477.5H871.17V487.0H871.95V496.8H872.73V508.3H873.51V517.8H874.29V528.2H875.07V539.1H875.85V543.8H876.63V542.9H877.41V545.3H878.19V546.8H878.97V548.1H879.75V551.3H880.53V545.4H881.31V544.1H882.09V543.6H882.87V546.5H883.65V546.4H884.43V548.5H885.21V547.2H885.99V550.3H886.77V551.2H887.55V549.5H888.33V552.5H889.11V553.7H889.89V555.1H890.67V554.8H891.45V549.2H892.23V543.0H893.01V538.5H893.79V536.2H894.57V533.1H895.35V529.0H896.13V528.6H896.91V524.8H897.69V528.7H898.47V520.6H899.25V516.4H900.03V513.2H900.81V505.9H901.59V500.7H902.37V498.7H903.15V496.9H903.93V495.9H904.71V491.8H905.49V492.5H906.27V491.0H907.05V490.3H907.83V493.5H908.61V495.2H909.39V495.7H910.17V498.1H911.73V497.2H912.51V496.4H913.29V495.3H914.07V499.0H914.85V496.1H915.63V492.1H916.41V486.3H917.19V482.6H917.97V476.5H918.75V469.5H919.53V459.2H920.31V450.6H921.08V449.4H921.86V449.7H922.64V449.6H923.42V449.7H924.20V453.3H924.98V463.6H925.76V476.2H926.54V483.5H927.32V492.8H928.10V503.2H928.88V511.8H929.66V524.0H930.44V538.7H931.22V554.2H932.00V566.8H932.78V581.2H933.56V609.4H934.34V644.1H935.12V688.1H935.90V691.7H936.68V693.0H938.24V692.3H939.02V691.9H939.80V692.4H940.58V692.2H941.36V692.5H942.14V693.6H942.92V696.4H943.70V697.9H944.48V699.8H945.26V701.4H946.04V706.8H946.82V709.7H947.60V713.8H948.38V717.6H949.16V704.6H949.94V690.2H950.72V674.1H951.50V664.2H952.28V654.8H953.06V648.7H953.84V642.2H954.62V640.7H955.40V636.6H956.18V633.7H956.96V633.2H957.74V645.2H958.52V656.2H959.30V664.9H960.08V678.3H960.86V701.3H961.64V721.2H962.42V740.7H963.20V742.1H963.98V743.8H964.76V745.8H965.54V747.3H966.32V749.5H967.88V748.7H968.66V749.6H969.44V749.9H970.22V751.1H971.00V749.0H971.78V750.8H972.56V751.0H973.34V750.5H974.12V750.1H974.90V751.4H975.68V754.4H976.46V756.7H977.24V760.6H978.02V764.8H978.80V768.7H979.58V771.3H980.36V772.8H981.14V774.7H981.92V777.4H982.70V779.8H984.26V778.2H985.04V773.9H985.82V769.4H986.60V763.0H987.38V761.8H988.16V755.8H988.94V752.6H989.72V754.2H990.50V762.9H991.28V771.5H992.06V772.0H993.62V772.2H994.40V771.4H995.18V771.2H995.96V772.2H996.74V773.2H997.52V773.5H998.30V772.1H999.07V772.8H999.85V773.4H1000.63V759.8H1001.41V735.1H1002.19V721.4H1002.97V715.4H1003.75V712.6H1004.53V710.8H1005.31V707.8H1006.09V704.6H1006.87V701.4H1007.65V700.1H1008.43V703.9H1009.21V708.3H1009.99V712.0H1010.77V716.8H1011.55V721.3H1012.33V725.3H1013.11V730.4H1013.89V732.9H1014.67V738.4H1015.45V736.3H1016.23V731.0H1017.01V729.2H1017.79V734.0H1018.57V738.8H1019.35V739.1H1020.13V740.5H1020.91V741.8H1021.69V739.1H1022.47V740.5H1023.25V739.9H1024.03V738.8H1024.81V739.1H1025.59V738.9H1026.37V737.7H1027.15V736.9H1027.93V734.6H1028.71V732.1H1029.49V729.9H1030.27V728.2H1031.05V733.8H1031.83V738.9H1032.61V745.8H1033.39V752.0H1034.17V757.5H1034.95V763.3H1035.73V764.7H1036.51V765.6H1037.29V766.8H1038.07V768.1H1038.85V768.7H1039.63V769.8H1040.41V768.5H1041.19V766.7H1041.97V764.9H1042.75V767.0H1043.53V768.0H1044.31V771.7H1045.09V773.5H1045.87V775.3H1046.65V777.8H1047.43V778.2H1048.21V775.8H1048.99V774.1H1049.77V771.5H1050.55V770.3H1051.33V770.2H1052.11V771.9H1052.89V772.3H1053.67V773.6H1054.45V775.9H1055.23V775.4H1056.01V777.7H1056.79V776.3H1057.57V778.1H1059.13V780.8H1059.91V783.3H1060.69V784.3H1061.47V786.1H1062.25V782.4H1063.03V781.8H1063.81V779.7H1064.59V777.2H1065.37V771.5H1066.15V766.8H1066.93V765.0H1067.71V762.8H1068.49V765.2H1069.27V768.3H1070.05V781.4H1070.83V780.6H1071.61V781.7H1072.39V784.2H1073.17V784.4H1073.95V786.6H1074.73V792.0H1075.51V800.1H1076.29V802.5H1077.07V800.8H1077.84V799.7H1078.62V801.2H1079.40V806.9H1080.18V808.4H1080.96V809.4H1081.74V807.1H1082.52V807.3H1083.30V809.7H1084.08V810.8H1084.86V812.5H1085.64V814.0H1086.42V815.7H1087.20V812.6H1087.98V805.6H1088.76V803.2H1089.54V801.5H1090.32V802.4H1091.10V801.7H1091.88V801.8H1092.66V803.9H1093.44V811.7H1094.22V820.3H1095.00V817.6H1095.78V816.1H1096.56V814.0H1097.34V813.4H1098.12V812.3H1098.90V811.6H1099.68V811.8H1100.46V813.4H1101.24V812.2H1102.02V814.8H1102.80V815.8H1103.58V817.7H1104.36V818.4H1105.14V818.9H1105.92V818.5H1106.70V817.9H1107.48V817.8H1108.26V817.4H1109.04V816.6H1109.82V818.9H1110.60V816.9H1111.38V819.1H1112.16V820.2H1112.94V820.3H1113.72V820.5H1115.28V821.1H1116.06V820.1H1116.84V819.8H1117.62V818.5H1118.40V819.9H1119.18V818.3H1119.96V817.9H1120.74V818.2H1121.52V817.8H1122.30V816.5H1123.08V816.1H1123.86V815.9H1124.64V813.1H1125.42V812.1H1126.20V812.2H1126.98V809.5H1127.76V809.4H1128.54V809.8H1129.32V809.4H1130.10V807.8H1130.88V807.4H1131.66V807.5H1132.44V804.9H1133.22V805.1H1134.00V805.2H1134.78V803.2H1135.56V803.4H1137.12V801.7H1137.90V804.3H1138.68V801.8H1139.46V802.5H1140.24V800.6H1141.80V799.0H1142.58V798.2H1143.36V796.2H1144.14V797.3H1144.92V795.8H1145.70V795.6H1146.48V794.8H1147.26V795.2H1148.04V797.7H1148.82V799.2H1149.60V799.6H1150.38V800.5H1151.16V801.0H1151.94V797.2H1152.72V795.5H1153.50V792.7H1154.28V793.2H1155.06V793.0H1155.83V791.5H1156.61V791.2H1157.39V790.6H1158.17V789.0H1158.95V790.1H1159.73V791.6H1160.51V791.3H1161.29V791.1H1162.07V789.4H1162.85V789.8H1163.63V789.2H1164.41V791.7H1165.19V793.1H1165.97V794.8H1166.75V796.2H1167.53V795.3H1168.31V794.2H1169.09V792.6H1169.87V799.9H1170.65V803.8H1171.43V804.8H1172.21V800.5H1172.99V795.2H1173.77V792.3H1174.55V796.8H1175.33V794.7H1176.11V788.2H1176.89V784.1H1177.67V782.4H1178.45V778.6H1179.23V776.2H1180.01V780.4H1180.79V781.0H1181.57V785.3H1182.35V788.0H1183.13V788.2H1183.91V789.3H1184.69V789.5H1185.47V790.0H1186.25V788.1H1187.03V788.5H1187.81V788.0H1188.59V788.2H1190.15V787.2H1190.93V789.1H1191.71V788.5H1192.49V785.7H1193.27V787.0H1194.05V787.3H1194.83V786.1H1195.61V785.1H1196.39V783.9H1197.17V782.4H1197.95V779.0H1199.51V778.7H1200.29V781.1H1201.07V780.8H1202.63V781.6H1203.41V781.4H1204.19V781.5H1204.97V781.0H1205.75V777.2H1206.53V777.5H1207.31V774.5H1208.09V774.1H1208.87V775.7H1209.65V778.2H1210.43V783.7H1211.21V784.9H1211.99V788.0H1212.77V788.3H1213.55V785.5H1214.33V786.6H1215.11V787.6H1215.89V785.9H1216.67V784.7H1217.45V785.7H1218.23V785.1H1219.01V787.2H1219.79V786.6H1220.57V788.2H1221.35V786.1H1222.13V788.2H1222.91V786.4H1223.69V785.1H1224.47V785.6H1225.25V785.8H1226.03V785.1H1226.81V784.5H1227.59V782.2H1228.37V780.4H1229.15V780.3H1229.93V780.4H1230.71V780.9H1231.49V780.0H1232.27V780.2H1233.05V778.5H1233.82V780.3H1234.60V778.5H1235.38V778.6H1236.16V775.9H1236.94V775.2H1237.72V775.5H1238.50V775.4H1239.28V775.7H1240.06V777.6H1240.84V779.1H1241.62V780.9H1242.40V781.9H1243.18V784.9H1243.96V782.9H1244.74V783.9H1245.52V781.7H1246.30V783.2H1247.08V782.4H1247.86V783.4H1248.64V779.5H1249.42V780.8H1250.20V781.2H1250.98V779.7H1251.76V776.8H1252.54V775.6H1253.32V776.0H1254.10V775.3H1254.88V777.0H1255.66V775.4H1256.44V774.2H1257.22V774.3H1258.00V774.4H1258.78V773.6H1259.56V773.4H1260.34V773.6H1261.12V770.4H1261.90V765.4H1262.68V765.8H1263.46V764.9H1264.24V762.9H1265.02V762.1H1265.80V759.7H1266.58V759.6H1267.36V756.0H1268.14V753.6H1268.92V752.1H1269.70V755.8H1270.48V760.6H1271.26V760.4H1272.04V764.3H1272.82V765.9H1273.60V766.2H1274.38V765.2H1275.16V767.4H1275.94V768.6H1276.72V767.9H1277.50V767.6H1278.28V768.3H1279.06V767.6H1279.84V769.4H1280.62V769.7H1281.40V768.8H1282.18V770.8H1282.96V770.6H1283.74V769.5H1284.52V769.6H1285.30V771.9H1286.08V767.5H1286.86V765.3H1287.64V761.7H1288.42V766.4H1289.20V762.3H1289.98V761.6H1290.76V759.8H1291.54V761.5H1292.32V765.0H1293.10V764.8H1293.88V766.8H1294.66V768.6H1295.44V769.4H1296.22V776.3H1297.00V776.5H1297.78V773.4H1298.56V776.6H1299.34V776.3H1300.12V777.7H1300.90V780.1H1301.68V778.5H1302.46V778.1H1303.24V777.9H1304.02V778.2H1304.80V779.3H1305.58V777.3H1306.36V776.0H1307.14V777.0H1307.92V775.0H1308.70V777.5H1309.48V777.3H1310.26V777.8H1311.03V778.5H1311.81V781.3H1312.59V779.7H1313.37V779.8H1314.15V779.6H1314.93V779.1H1315.71V776.9H1316.49V778.2H1317.27V776.9H1318.05V777.3H1318.83V779.0H1319.61V779.8H1320.39V777.3H1321.17V777.1H1321.95V775.5H1322.73V774.9H1323.51V773.8H1324.29V772.6H1325.07V772.2H1325.85V770.3H1326.63V772.4H1327.41V768.9H1328.19V771.7H1328.97V769.1H1329.75V771.6H1330.53V769.3H1331.31V772.8H1332.09V773.7H1332.87V773.1H1334.43V775.4H1335.21V774.0H1335.99V774.1H1336.77V776.0H1337.55V773.7H1338.33V774.7H1339.11V777.3H1339.89V779.6H1340.67V781.2H1341.45V781.3H1342.23V780.8H1343.01V781.4H1343.79V777.6H1344.57V775.9H1345.35V774.6H1346.13V773.6H1346.91V772.9H1347.69V770.7H1348.47V767.3H1349.25V766.2H1350.03V765.0H1350.81V762.8H1351.59V763.0H1352.37V762.3H1353.15V761.9H1353.93V763.7H1354.71V759.3H1355.49V760.6H1356.27V758.2H1357.05V755.7H1357.83V754.8H1358.61V753.2H1359.39V751.3H1360.17V748.1H1360.95V744.7H1361.73V745.0H1362.51V741.7H1363.29V739.9H1364.07V742.4H1364.85V739.2H1365.63V738.8H1366.41V738.0H1367.19V737.0H1367.97V736.4H1368.75V736.3H1369.53V733.9H1370.31V732.7H1371.87V733.4H1372.65V736.3H1373.43V738.3H1374.21V735.4H1374.99V737.2H1375.77V734.3H1376.55V730.4H1377.33V727.0H1378.11V725.1H1378.89V724.6H1379.67V722.4H1380.45V725.1H1381.23V720.5H1382.01V717.7H1382.79V710.9H1383.57V709.9H1384.35V707.3H1385.13V704.7H1385.91V700.3H1386.69V704.1H1387.47V697.1H1388.25V701.8H1389.03V703.3H1389.80V705.9H1390.58V704.8H1391.36V700.0H1392.14V699.6H1392.92V697.1H1393.70V696.0H1394.48V693.7H1395.26V689.5H1396.04V688.2H1396.82V688.6H1397.60V690.0H1398.38V691.7H1399.16V690.7H1399.94V692.3H1400.72V690.9H1401.50V689.2H1402.28V690.7H1403.06V685.9H1403.84V684.5H1404.62V685.2H1405.40V684.6H1406.18V686.5H1406.96V685.8H1407.74V685.9H1408.52V684.4H1409.30V684.0H1410.08V681.2H1410.86V678.0H1411.64V673.0H1412.42V669.1H1413.20V669.0H1413.98V667.3H1414.76V664.0H1415.54V671.7H1416.32V671.9H1417.10V675.1H1417.88V674.7H1418.66V680.6H1419.44V681.5H1420.22V686.2H1421.00V692.8H1421.78V697.7H1422.56V697.4H1423.34V693.9H1424.12V692.8H1424.90V688.4H1425.68V687.3H1426.46V686.8H1427.24V683.8H1428.02V682.9H1428.80V688.8H1429.58V685.7H1430.36V684.1H1431.14V680.5H1431.92V675.5H1432.70V667.9H1433.48V665.1H1434.26V663.1H1435.04V661.7H1435.82V657.7H1436.60V658.3H1437.38V652.8H1438.16V649.6H1438.94V645.4H1439.72V638.5H1440.50V632.4H1441.28V632.6H1442.06V637.0H1442.84V633.4H1443.62V632.9H1444.40V626.3H1445.18V623.3H1445.96V615.9H1446.74V611.1H1447.52V609.8H1448.30V602.0H1449.08V605.0H1449.86V598.0H1450.64V589.7H1451.42V585.3H1452.20V576.1H1452.98V568.3H1453.76V566.7H1454.54V558.3H1455.32V552.0H1456.10V548.3H1456.88V549.9H1457.66V558.9H1458.44V557.6H1459.22V561.4H1460.00V563.2H1460.78V566.5H1461.56V570.9H1462.34V578.1H1463.12V583.6H1463.90V595.6H1464.68V595.8H1465.46V594.8H1466.24V592.2H1467.02V587.3H1467.79V581.5H1468.57V579.3H1469.35V575.4H1470.13V576.0H1470.91V566.8H1471.69V555.7H1472.47V540.8H1473.25V556.1H1474.03V562.7H1474.81V573.6H1475.59V573.4H1476.37V574.6H1477.15V560.4H1477.93V557.3H1478.71V555.7H1479.49V566.5H1480.27V568.6H1481.05V573.8H1481.83V579.2H1482.61V577.8H1483.39V579.3H1484.17V587.4H1484.95V587.6H1485.73V598.7H1486.51V603.5H1487.29V607.9H1488.07V606.4H1488.85V598.4H1489.63V599.7H1490.41V593.6H1491.19V594.1H1491.97V588.6H1492.75V593.8H1493.53V595.6H1494.31V593.1H1495.09V601.1H1495.87V604.2H1496.65V605.7H1497.43V606.0H1498.21V607.9H1498.99V607.5H1499.77V611.1H1500.55V607.1H1501.33V611.7H1502.11V610.1H1502.89V610.8H1503.67V608.8H1504.45V608.3H1505.23V601.8H1506.01V599.5H1506.79V594.5H1507.57V594.2H1508.35V593.5H1509.13V593.8H1509.91V592.2H1510.69V585.7H1511.47V579.9H1512.25V566.4H1513.03V557.1H1513.81V555.6H1514.59V551.5H1515.37V551.6H1516.15V546.0H1516.93V542.4H1517.71V541.8H1518.49V535.3H1519.27V532.1H1520.05V527.6H1520.83V525.8H1521.61V517.6H1522.39V517.0H1523.17V510.6H1523.95V502.4H1524.73V498.7H1525.51V500.9H1526.29V501.5H1527.07V499.8H1527.85V497.2H1528.63V504.0H1529.41V508.0H1530.19V511.2H1530.97V507.1H1531.75V512.8H1532.53V513.0H1533.31V508.2H1534.09V505.1H1534.87V508.3H1535.65V509.3H1536.43V515.7H1537.21V518.2H1537.99V515.6H1538.77V514.5H1539.55V510.9H1540.33V503.2H1541.11V502.5H1541.89V501.8H1542.67V502.5H1543.45V501.1H1544.23V497.2H1545.01V503.9H1545.78V505.1H1546.56V514.0H1547.34V516.1H1548.12V523.9H1548.90V525.6H1549.68V521.0H1550.46V522.3H1551.24V520.3H1552.02V521.1H1552.80V516.7H1553.58V514.8H1554.36V513.3H1555.14V508.9H1555.92V500.0H1556.70V505.2H1557.48V498.3H1558.26V493.7H1559.04V489.7H1559.82V483.9H1560.60V480.7H1561.38V477.2H1562.16V480.1H1562.94V477.1H1563.72V483.9H1564.50V487.5H1565.28V486.8H1566.06V485.1H1566.84V490.2H1567.62V491.6H1568.40V494.2H1569.18V503.9H1569.96V513.8H1570.74V545.3H1571.52V589.2H1572.30V577.0H1573.08V566.0H1573.86V559.9H1574.64V562.0H1575.42V560.9H1576.20V557.9H1576.98V560.1H1577.76V558.8H1578.54V562.1H1579.32V565.8H1580.10V563.9H1580.88V559.4H1581.66V564.2H1582.44V562.2H1583.22V558.1H1584.00V929.0Z" fill="#8a1aff"/><path d="M299.50 929.0V927.9H300.28V927.3H317.44V928.6H318.22V929.0ZM392.31 929.0V928.9H393.09V927.8H393.87V926.2H394.65V924.5H395.43V922.7H396.21V920.7H396.99V918.7H397.77V918.9H399.33V918.1H400.11V917.7H401.67V917.9H402.45V916.9H403.23V917.1H404.01V916.6H404.79V915.6H405.57V910.9H406.35V906.0H407.13V903.0H407.91V901.7H408.69V901.6H409.47V900.1H410.25V898.2H411.03V897.9H411.81V897.2H412.59V896.0H413.37V895.5H414.15V895.0H414.93V894.7H415.71V894.3H416.49V894.2H417.27V894.0H418.05V895.6H418.83V897.4H419.61V899.2H420.39V900.5H421.17V902.6H421.95V904.5H422.73V902.6H423.51V900.0H424.29V897.2H425.07V894.8H425.85V891.7H426.63V895.7H427.41V898.5H428.19V898.4H428.97V897.7H429.75V897.4H430.53V897.1H431.31V896.9H432.09V896.3H432.87V894.3H433.65V892.9H434.43V891.6H435.21V891.2H435.99V889.3H436.77V889.0H437.55V887.4H438.33V886.2H439.11V885.5H439.89V884.6H440.67V895.7H441.45V898.2H442.23V898.8H443.01V898.3H443.79V898.4H444.57V898.1H445.35V898.0H446.91V897.4H448.47V896.9H449.25V896.8H450.03V897.1H450.81V896.4H451.59V897.1H452.37V898.1H453.14V898.5H453.92V899.1H454.70V900.8H455.48V901.8H456.26V903.6H457.04V904.2H457.82V904.4H458.60V904.9H459.38V904.0H460.16V903.9H460.94V904.2H461.72V904.1H462.50V904.2H463.28V903.4H464.06V903.6H464.84V902.3H465.62V900.1H466.40V899.2H467.18V897.8H467.96V897.0H468.74V896.4H469.52V895.1H470.30V894.2H471.08V894.0H471.86V893.0H472.64V892.7H473.42V892.9H474.20V893.9H474.98V893.4H475.76V893.3H476.54V891.8H477.32V891.6H478.10V891.3H478.88V891.8H479.66V892.0H480.44V891.4H481.22V891.2H482.00V891.4H482.78V890.9H483.56V890.6H484.34V890.4H485.90V890.2H486.68V888.7H487.46V887.7H488.24V887.0H489.02V886.4H489.80V886.0H490.58V884.9H491.36V884.6H492.14V883.7H492.92V883.2H493.70V882.0H494.48V881.0H495.26V880.9H496.04V880.8H497.60V880.3H498.38V880.7H499.16V880.4H499.94V881.2H500.72V881.5H501.50V882.1H502.28V881.6H503.06V879.6H503.84V878.9H504.62V877.5H505.40V876.4H506.18V875.7H506.96V875.0H507.74V874.2H508.52V873.5H509.30V873.1H510.08V872.7H510.86V872.4H511.64V872.2H512.42V871.3H513.20V871.0H513.98V869.7H514.76V870.9H515.54V869.9H516.32V868.4H517.10V869.0H517.88V868.6H518.66V867.1H519.44V865.7H520.22V870.9H521.00V875.5H521.78V875.3H522.56V874.9H523.34V872.6H524.12V873.2H524.90V870.7H525.68V869.8H526.46V868.6H527.24V868.0H528.02V867.6H528.80V867.7H529.58V868.2H530.36V866.6H531.13V866.1H531.91V865.2H532.69V864.9H533.47V863.8H534.25V863.2H535.03V862.1H535.81V861.8H536.59V859.9H537.37V858.7H538.15V858.3H538.93V857.9H539.71V858.0H540.49V857.0H541.27V858.7H542.05V857.8H542.83V858.7H543.61V858.4H544.39V858.6H545.17V860.0H545.95V860.2H546.73V861.1H547.51V860.4H548.29V861.7H549.07V860.2H549.85V858.7H550.63V864.4H551.41V861.7H552.19V860.7H552.97V859.0H553.75V856.9H554.53V855.8H555.31V857.1H556.09V859.5H556.87V853.4H557.65V848.5H558.43V843.9H559.21V841.3H559.99V838.3H560.77V838.1H561.55V839.4H562.33V838.9H563.11V836.8H563.89V838.7H564.67V843.2H565.45V848.2H566.23V839.5H567.01V836.4H567.79V835.7H568.57V834.0H569.35V831.8H570.13V830.0H570.91V829.7H571.69V828.8H572.47V825.0H573.25V822.6H574.03V817.0H574.81V813.4H575.59V809.7H576.37V803.7H577.15V799.6H577.93V796.7H578.71V791.3H579.49V787.8H580.27V782.9H581.05V779.1H581.83V771.2H582.61V760.3H583.39V749.9H584.17V739.2H584.95V727.8H585.73V718.6H586.51V708.3H587.29V697.2H588.07V692.7H588.85V706.3H589.63V719.4H590.41V723.2H591.19V721.7H591.97V723.7H592.75V721.3H593.53V723.1H594.31V718.6H595.09V713.6H595.87V709.6H596.65V706.7H597.43V706.4H598.21V702.8H598.99V703.9H599.77V705.5H600.55V695.9H601.33V689.5H602.11V680.7H602.89V673.1H603.67V669.1H604.45V663.8H605.23V660.2H606.01V655.3H606.79V653.0H607.57V647.0H608.35V637.2H609.12V634.8H609.90V628.2H610.68V626.3H611.46V623.0H612.24V621.8H613.02V623.4H613.80V622.0H614.58V619.9H615.36V619.8H616.14V619.4H616.92V618.5H617.70V612.6H618.48V600.2H619.26V594.3H620.04V581.3H620.82V566.6H621.60V564.6H622.38V557.7H623.16V559.7H623.94V546.2H624.72V544.9H625.50V540.9H626.28V534.5H627.06V528.6H627.84V526.1H628.62V506.1H629.40V491.7H630.18V471.9H630.96V468.5H631.74V488.9H632.52V508.0H633.30V521.1H634.08V526.2H634.86V526.8H635.64V530.7H636.42V527.7H637.20V518.0H637.98V515.1H638.76V500.5H639.54V465.9H640.32V439.2H641.10V410.6H641.88V393.9H642.66V369.9H643.44V353.5H644.22V338.5H645.00V321.8H645.78V285.8H646.56V228.4H647.34V180.3H648.12V159.2H648.90V161.9H649.68V169.3H650.46V170.2H651.24V209.8H652.02V250.9H652.80V278.0H653.58V290.7H654.36V284.3H655.14V274.7H655.92V281.7H656.70V325.5H657.48V425.8H658.26V440.0H659.04V457.0H659.82V465.7H660.60V474.8H661.38V459.6H662.16V445.0H662.94V431.1H663.72V419.7H664.50V406.7H665.28V396.9H666.06V392.6H666.84V385.7H667.62V376.1H668.40V372.4H669.18V370.3H669.96V373.1H670.74V372.4H671.52V375.0H672.30V382.8H673.08V389.7H673.86V394.3H674.64V393.1H675.42V390.6H676.20V388.4H676.98V384.6H677.76V389.1H678.54V406.1H679.32V423.1H680.10V433.4H680.88V442.7H681.66V450.4H682.44V464.8H683.22V477.0H684.00V483.5H684.78V481.2H685.56V482.0H686.34V481.4H687.12V493.3H687.89V500.3H688.67V509.9H689.45V517.5H690.23V522.3H691.01V520.8H691.79V516.6H692.57V512.1H693.35V501.9H694.13V494.1H694.91V486.0H695.69V475.6H696.47V468.3H697.25V458.6H698.03V448.7H698.81V435.5H699.59V426.7H700.37V415.6H701.15V404.4H701.93V395.4H702.71V386.1H703.49V381.9H704.27V378.5H705.05V374.9H705.83V374.6H706.61V372.2H707.39V370.2H708.17V367.1H708.95V360.8H709.73V353.3H710.51V348.2H711.29V342.4H712.07V335.6H712.85V331.2H713.63V324.6H714.41V325.4H715.19V325.8H715.97V326.2H716.75V327.2H717.53V319.1H718.31V313.3H719.09V303.6H719.87V285.7H720.65V275.5H721.43V274.0H722.21V268.3H722.99V265.3H723.77V261.4H724.55V255.2H725.33V252.3H726.11V248.2H726.89V247.2H727.67V249.0H728.45V246.5H729.23V248.2H730.01V243.3H730.79V244.7H731.57V241.3H732.35V241.0H733.13V242.3H733.91V240.3H734.69V243.2H735.47V243.6H736.25V238.1H737.03V237.3H737.81V231.5H738.59V227.4H739.37V216.5H740.15V201.4H740.93V191.1H741.71V179.7H742.49V182.7H743.27V200.4H744.05V214.1H744.83V221.8H745.61V226.1H746.39V226.5H747.17V233.7H747.95V237.5H748.73V233.6H749.51V230.9H750.29V231.9H751.07V230.8H751.85V235.6H752.63V243.0H753.41V248.9H754.19V251.9H755.75V258.2H756.53V256.7H757.31V260.9H758.09V268.0H758.87V277.5H759.65V290.9H760.43V342.1H761.21V377.4H761.99V377.6H762.77V364.7H763.55V344.4H764.33V340.9H765.10V334.4H765.88V336.1H766.66V333.0H767.44V335.7H768.22V322.6H769.00V306.8H769.78V288.6H770.56V269.8H771.34V239.5H772.12V229.5H772.90V229.6H773.68V227.2H774.46V223.9H775.24V222.4H776.02V224.8H776.80V222.5H777.58V222.0H778.36V221.1H779.14V218.2H779.92V216.3H780.70V214.2H781.48V212.9H782.26V210.7H783.04V243.1H783.82V263.9H784.60V279.9H785.38V276.3H786.16V269.7H786.94V263.7H787.72V253.3H788.50V245.6H789.28V232.3H790.06V226.2H790.84V221.9H791.62V217.6H792.40V215.8H793.18V222.3H793.96V220.0H794.74V220.1H795.52V228.1H796.30V233.0H797.08V242.2H797.86V254.2H798.64V250.0H799.42V246.7H800.20V245.6H800.98V241.9H801.76V239.2H802.54V243.0H803.32V245.1H804.10V247.5H804.88V247.4H805.66V247.0H806.44V249.0H807.22V238.2H808.00V231.2H808.78V229.7H809.56V236.6H810.34V245.3H811.12V242.1H811.90V240.8H812.68V234.6H813.46V227.6H814.24V222.7H815.02V224.3H815.80V228.3H816.58V229.3H817.36V226.9H818.14V232.3H818.92V241.6H819.70V251.3H820.48V257.9H821.26V254.2H822.04V251.1H822.82V247.9H823.60V242.6H824.38V243.4H825.16V238.4H825.94V234.7H826.72V235.0H827.50V233.3H828.28V230.1H829.06V230.4H829.84V234.3H830.62V239.2H831.40V243.5H832.18V254.0H832.96V265.6H833.74V265.2H834.52V265.8H835.30V262.9H836.08V272.4H836.86V282.3H837.64V295.3H838.42V295.1H839.20V295.6H839.98V294.5H840.76V294.9H841.54V292.9H842.32V294.4H843.09V291.3H843.87V287.4H844.65V282.9H845.43V283.6H846.21V288.7H846.99V291.5H847.77V301.3H848.55V319.3H849.33V346.1H850.11V408.4H850.89V427.7H851.67V441.3H852.45V438.9H853.23V440.2H854.01V441.1H854.79V442.3H855.57V441.7H856.35V442.9H857.13V438.4H857.91V435.3H858.69V430.1H859.47V427.1H860.25V422.9H861.03V418.0H861.81V413.0H862.59V406.0H863.37V402.3H864.15V397.3H864.93V391.3H865.71V406.0H866.49V424.0H867.27V438.3H868.05V449.9H868.83V457.3H869.61V469.4H870.39V477.5H871.17V487.0H871.95V496.8H872.73V508.3H873.51V517.8H874.29V528.2H875.07V539.1H875.85V543.8H876.63V542.9H877.41V545.3H878.19V546.8H878.97V548.1H879.75V551.3H880.53V545.4H881.31V544.1H882.09V543.6H882.87V546.5H883.65V546.4H884.43V548.5H885.21V547.2H885.99V550.3H886.77V551.2H887.55V549.5H888.33V552.5H889.11V553.7H889.89V555.1H890.67V554.8H891.45V549.2H892.23V543.0H893.01V538.5H893.79V536.2H894.57V533.1H895.35V529.0H896.13V528.6H896.91V524.8H897.69V528.7H898.47V520.6H899.25V516.4H900.03V513.2H900.81V505.9H901.59V500.7H902.37V498.7H903.15V496.9H903.93V495.9H904.71V491.8H905.49V492.5H906.27V491.0H907.05V490.3H907.83V493.5H908.61V495.2H909.39V495.7H910.17V498.1H911.73V497.2H912.51V496.4H913.29V495.3H914.07V499.0H914.85V496.1H915.63V492.1H916.41V486.3H917.19V482.6H917.97V476.5H918.75V469.5H919.53V459.2H920.31V450.6H921.08V449.4H921.86V449.7H922.64V449.6H923.42V449.7H924.20V453.3H924.98V463.6H925.76V476.2H926.54V483.5H927.32V492.8H928.10V503.2H928.88V511.8H929.66V524.0H930.44V538.7H931.22V554.2H932.00V566.8H932.78V581.2H933.56V609.4H934.34V644.1H935.12V688.1H935.90V691.7H936.68V693.0H938.24V692.3H939.02V691.9H939.80V692.4H940.58V692.2H941.36V692.5H942.14V693.6H942.92V696.4H943.70V697.9H944.48V699.8H945.26V701.4H946.04V706.8H946.82V709.7H947.60V713.8H948.38V717.6H949.16V704.6H949.94V690.2H950.72V674.1H951.50V664.2H952.28V654.8H953.06V648.7H953.84V642.2H954.62V640.7H955.40V636.6H956.18V633.7H956.96V633.2H957.74V645.2H958.52V656.2H959.30V664.9H960.08V678.3H960.86V701.3H961.64V721.2H962.42V740.7H963.20V742.1H963.98V743.8H964.76V745.8H965.54V747.3H966.32V749.5H967.88V748.7H968.66V749.6H969.44V749.9H970.22V751.1H971.00V749.0H971.78V750.8H972.56V751.0H973.34V750.5H974.12V750.1H974.90V751.4H975.68V754.4H976.46V756.7H977.24V760.6H978.02V764.8H978.80V768.7H979.58V771.3H980.36V772.8H981.14V774.7H981.92V777.4H982.70V779.8H984.26V778.2H985.04V773.9H985.82V769.4H986.60V763.0H987.38V761.8H988.16V755.8H988.94V752.6H989.72V754.2H990.50V762.9H991.28V771.5H992.06V772.0H993.62V772.2H994.40V771.4H995.18V771.2H995.96V772.2H996.74V773.2H997.52V773.5H998.30V772.1H999.07V772.8H999.85V773.4H1000.63V759.8H1001.41V735.1H1002.19V721.4H1002.97V715.4H1003.75V712.6H1004.53V710.8H1005.31V707.8H1006.09V704.6H1006.87V701.4H1007.65V700.1H1008.43V703.9H1009.21V708.3H1009.99V712.0H1010.77V716.8H1011.55V721.3H1012.33V725.3H1013.11V730.4H1013.89V732.9H1014.67V738.4H1015.45V736.3H1016.23V731.0H1017.01V729.2H1017.79V734.0H1018.57V738.8H1019.35V739.1H1020.13V740.5H1020.91V741.8H1021.69V739.1H1022.47V740.5H1023.25V739.9H1024.03V738.8H1024.81V739.1H1025.59V738.9H1026.37V737.7H1027.15V736.9H1027.93V734.6H1028.71V732.1H1029.49V729.9H1030.27V728.2H1031.05V733.8H1031.83V738.9H1032.61V745.8H1033.39V752.0H1034.17V757.5H1034.95V763.3H1035.73V764.7H1036.51V765.6H1037.29V766.8H1038.07V768.1H1038.85V768.7H1039.63V769.8H1040.41V768.5H1041.19V766.7H1041.97V764.9H1042.75V767.0H1043.53V768.0H1044.31V771.7H1045.09V773.5H1045.87V775.3H1046.65V777.8H1047.43V778.2H1048.21V775.8H1048.99V774.1H1049.77V771.5H1050.55V770.3H1051.33V770.2H1052.11V771.9H1052.89V772.3H1053.67V773.6H1054.45V775.9H1055.23V775.4H1056.01V777.7H1056.79V776.3H1057.57V778.1H1059.13V780.8H1059.91V783.3H1060.69V784.3H1061.47V786.1H1062.25V782.4H1063.03V781.8H1063.81V779.7H1064.59V777.2H1065.37V771.5H1066.15V766.8H1066.93V765.0H1067.71V762.8H1068.49V765.2H1069.27V768.3H1070.05V781.4H1070.83V780.6H1071.61V781.7H1072.39V784.2H1073.17V784.4H1073.95V786.6H1074.73V792.0H1075.51V800.1H1076.29V802.5H1077.07V800.8H1077.84V799.7H1078.62V801.2H1079.40V806.9H1080.18V808.4H1080.96V809.4H1081.74V807.1H1082.52V807.3H1083.30V809.7H1084.08V810.8H1084.86V812.5H1085.64V814.0H1086.42V815.7H1087.20V812.6H1087.98V805.6H1088.76V803.2H1089.54V801.5H1090.32V802.4H1091.10V801.7H1091.88V801.8H1092.66V803.9H1093.44V811.7H1094.22V820.3H1095.00V817.6H1095.78V816.1H1096.56V814.0H1097.34V813.4H1098.12V812.3H1098.90V811.6H1099.68V811.8H1100.46V813.4H1101.24V812.2H1102.02V814.8H1102.80V815.8H1103.58V817.7H1104.36V818.4H1105.14V818.9H1105.92V818.5H1106.70V817.9H1107.48V817.8H1108.26V817.4H1109.04V816.6H1109.82V818.9H1110.60V816.9H1111.38V819.1H1112.16V820.2H1112.94V820.3H1113.72V820.5H1115.28V821.1H1116.06V820.1H1116.84V819.8H1117.62V818.5H1118.40V819.9H1119.18V818.3H1119.96V817.9H1120.74V818.2H1121.52V817.8H1122.30V816.5H1123.08V816.1H1123.86V815.9H1124.64V813.1H1125.42V812.1H1126.20V812.2H1126.98V809.5H1127.76V809.4H1128.54V809.8H1129.32V809.4H1130.10V807.8H1130.88V807.4H1131.66V807.5H1132.44V804.9H1133.22V805.1H1134.00V805.2H1134.78V803.2H1135.56V803.4H1137.12V801.7H1137.90V804.3H1138.68V801.8H1139.46V802.5H1140.24V800.6H1141.80V799.0H1142.58V798.2H1143.36V796.2H1144.14V797.3H1144.92V795.8H1145.70V795.6H1146.48V794.8H1147.26V795.2H1148.04V797.7H1148.82V799.2H1149.60V799.6H1150.38V800.5H1151.16V801.0H1151.94V797.2H1152.72V795.5H1153.50V792.7H1154.28V793.2H1155.06V793.0H1155.83V791.5H1156.61V791.2H1157.39V790.6H1158.17V789.0H1158.95V790.1H1159.73V791.6H1160.51V791.3H1161.29V791.1H1162.07V789.4H1162.85V789.8H1163.63V789.2H1164.41V791.7H1165.19V793.1H1165.97V794.8H1166.75V796.2H1167.53V795.3H1168.31V794.2H1169.09V792.6H1169.87V799.9H1170.65V803.8H1171.43V804.8H1172.21V800.5H1172.99V795.2H1173.77V792.3H1174.55V796.8H1175.33V794.7H1176.11V788.2H1176.89V784.1H1177.67V782.4H1178.45V778.6H1179.23V776.2H1180.01V780.4H1180.79V781.0H1181.57V785.3H1182.35V788.0H1183.13V788.2H1183.91V789.3H1184.69V789.5H1185.47V790.0H1186.25V788.1H1187.03V788.5H1187.81V788.0H1188.59V788.2H1190.15V787.2H1190.93V789.1H1191.71V788.5H1192.49V785.7H1193.27V787.0H1194.05V787.3H1194.83V786.1H1195.61V785.1H1196.39V783.9H1197.17V782.4H1197.95V779.0H1199.51V778.7H1200.29V781.1H1201.07V780.8H1202.63V781.6H1203.41V781.4H1204.19V781.5H1204.97V781.0H1205.75V777.2H1206.53V777.5H1207.31V774.5H1208.09V774.1H1208.87V775.7H1209.65V778.2H1210.43V783.7H1211.21V784.9H1211.99V788.0H1212.77V788.3H1213.55V785.5H1214.33V786.6H1215.11V787.6H1215.89V785.9H1216.67V784.7H1217.45V785.7H1218.23V785.1H1219.01V787.2H1219.79V786.6H1220.57V788.2H1221.35V786.1H1222.13V788.2H1222.91V786.4H1223.69V785.1H1224.47V785.6H1225.25V785.8H1226.03V785.1H1226.81V784.5H1227.59V782.2H1228.37V780.4H1229.15V780.3H1229.93V780.4H1230.71V780.9H1231.49V780.0H1232.27V780.2H1233.05V778.5H1233.82V780.3H1234.60V778.5H1235.38V778.6H1236.16V775.9H1236.94V775.2H1237.72V775.5H1238.50V775.4H1239.28V775.7H1240.06V777.6H1240.84V779.1H1241.62V780.9H1242.40V781.9H1243.18V784.9H1243.96V782.9H1244.74V783.9H1245.52V781.7H1246.30V783.2H1247.08V782.4H1247.86V783.4H1248.64V779.5H1249.42V780.8H1250.20V781.2H1250.98V779.7H1251.76V776.8H1252.54V775.6H1253.32V776.0H1254.10V775.3H1254.88V777.0H1255.66V775.4H1256.44V774.2H1257.22V774.3H1258.00V774.4H1258.78V773.6H1259.56V773.4H1260.34V773.6H1261.12V770.4H1261.90V765.4H1262.68V765.8H1263.46V764.9H1264.24V762.9H1265.02V762.1H1265.80V759.7H1266.58V759.6H1267.36V756.0H1268.14V753.6H1268.92V752.1H1269.70V755.8H1270.48V760.6H1271.26V760.4H1272.04V764.3H1272.82V765.9H1273.60V766.2H1274.38V765.2H1275.16V767.4H1275.94V768.6H1276.72V767.9H1277.50V767.6H1278.28V768.3H1279.06V767.6H1279.84V769.4H1280.62V769.7H1281.40V768.8H1282.18V770.8H1282.96V770.6H1283.74V769.5H1284.52V769.6H1285.30V771.9H1286.08V769.8H1286.86V768.9H1287.64V766.8H1288.42V770.5H1289.20V768.8H1289.98V770.1H1290.76V769.5H1291.54V769.7H1292.32V771.4H1293.10V770.3H1294.66V772.2H1295.44V772.0H1296.22V781.7H1297.00V782.4H1297.78V780.6H1298.56V784.1H1299.34V783.8H1300.12V786.0H1300.90V788.2H1301.68V788.0H1302.46V788.1H1303.24V788.9H1304.02V790.1H1304.80V789.8H1305.58V789.7H1306.36V788.9H1307.14V788.5H1307.92V788.6H1308.70V788.5H1309.48V789.4H1310.26V787.6H1311.03V787.3H1311.81V789.0H1312.59V787.6H1313.37V787.0H1314.15V787.4H1314.93V786.4H1315.71V785.5H1316.49V785.6H1317.27V784.7H1318.05V784.8H1318.83V785.3H1319.61V788.4H1320.39V786.4H1321.17V786.7H1321.95V785.7H1322.73V784.7H1323.51V783.3H1324.29V782.4H1325.07V780.5H1325.85V778.7H1326.63V781.5H1327.41V779.5H1328.19V781.7H1328.97V780.8H1329.75V780.0H1330.53V779.5H1331.31V783.3H1332.09V784.7H1332.87V785.0H1333.65V784.2H1334.43V786.3H1335.21V786.4H1335.99V786.2H1336.77V784.1H1337.55V783.4H1338.33V783.3H1339.11V784.5H1339.89V786.5H1340.67V787.8H1341.45V787.1H1342.23V785.8H1343.01V786.7H1343.79V785.6H1344.57V784.9H1345.35V784.7H1346.13V782.4H1346.91V781.3H1347.69V779.0H1348.47V776.3H1349.25V776.6H1350.03V774.7H1350.81V773.6H1351.59V773.1H1352.37V771.2H1353.15V770.6H1353.93V770.2H1354.71V767.7H1355.49V768.8H1356.27V765.3H1357.05V764.8H1357.83V763.5H1358.61V764.0H1359.39V763.3H1360.17V762.4H1360.95V760.5H1361.73V762.2H1362.51V761.7H1363.29V761.1H1364.85V760.2H1365.63V758.9H1366.41V757.3H1367.19V758.7H1367.97V758.1H1368.75V756.4H1369.53V754.4H1370.31V755.6H1371.09V754.2H1371.87V755.1H1372.65V756.0H1373.43V759.5H1374.21V757.6H1374.99V757.7H1375.77V756.9H1376.55V757.6H1377.33V755.7H1378.11V755.4H1378.89V753.8H1379.67V752.1H1380.45V751.7H1381.23V749.2H1382.01V746.6H1382.79V745.7H1383.57V743.2H1384.35V741.2H1385.13V738.5H1385.91V735.4H1386.69V737.5H1387.47V735.5H1388.25V736.3H1389.03V737.0H1389.80V736.6H1390.58V736.8H1391.36V733.6H1392.14V733.5H1392.92V732.8H1393.70V730.8H1394.48V731.4H1395.26V729.4H1396.04V728.3H1396.82V728.1H1397.60V727.9H1398.38V727.0H1399.16V727.1H1399.94V727.3H1400.72V725.4H1401.50V726.6H1402.28V725.5H1403.06V723.1H1403.84V724.6H1404.62V726.2H1405.40V724.0H1406.18V726.4H1406.96V726.1H1407.74V725.2H1408.52V722.8H1409.30V724.9H1410.08V723.2H1410.86V721.8H1411.64V719.7H1412.42V715.4H1413.20V713.9H1413.98V712.6H1414.76V713.5H1415.54V716.6H1416.32V717.3H1417.10V719.4H1417.88V720.1H1418.66V723.7H1419.44V725.7H1420.22V728.0H1421.00V729.4H1421.78V732.0H1422.56V731.1H1423.34V730.4H1424.12V729.1H1424.90V727.0H1425.68V727.4H1426.46V726.6H1427.24V725.4H1428.02V724.9H1429.58V723.6H1431.14V719.5H1431.92V716.4H1432.70V711.3H1433.48V711.6H1434.26V710.6H1435.04V708.7H1435.82V706.2H1436.60V707.3H1437.38V704.6H1438.16V699.8H1438.94V689.4H1439.72V684.6H1440.50V681.3H1441.28V680.9H1442.06V680.1H1442.84V677.1H1443.62V677.7H1444.40V674.0H1445.18V669.7H1445.96V666.8H1446.74V661.7H1447.52V661.5H1448.30V654.0H1449.08V652.1H1449.86V646.3H1450.64V640.2H1451.42V637.0H1452.20V633.1H1452.98V628.0H1453.76V626.2H1454.54V620.3H1455.32V616.3H1456.10V617.2H1456.88V617.7H1457.66V620.4H1458.44V621.2H1459.22V620.8H1460.00V624.5H1460.78V627.6H1461.56V632.7H1462.34V637.8H1463.12V642.9H1463.90V649.8H1464.68V651.9H1465.46V650.5H1466.24V647.6H1467.02V640.9H1467.79V637.7H1468.57V634.8H1469.35V631.4H1470.13V630.6H1470.91V622.3H1471.69V614.8H1472.47V603.0H1473.25V617.6H1474.03V624.6H1474.81V630.7H1475.59V634.5H1476.37V628.1H1477.15V621.7H1477.93V617.6H1478.71V621.8H1479.49V628.4H1480.27V634.0H1481.05V636.2H1481.83V642.1H1482.61V644.5H1483.39V646.0H1484.17V650.4H1484.95V650.1H1485.73V651.2H1486.51V654.4H1487.29V656.8H1488.07V660.0H1488.85V652.3H1489.63V650.6H1490.41V645.6H1491.19V640.7H1491.97V637.4H1492.75V642.5H1493.53V643.9H1494.31V643.7H1495.09V649.0H1495.87V650.2H1496.65V651.6H1497.43V648.8H1498.21V648.7H1498.99V650.3H1499.77V652.6H1500.55V650.7H1501.33V653.1H1502.11V652.6H1502.89V652.8H1503.67V649.6H1504.45V648.5H1505.23V643.1H1506.01V642.0H1506.79V639.8H1507.57V638.5H1508.35V637.3H1509.13V637.9H1509.91V635.4H1510.69V629.2H1511.47V625.4H1512.25V618.7H1513.03V615.2H1513.81V610.0H1514.59V606.0H1515.37V602.5H1516.15V596.1H1516.93V592.0H1517.71V587.2H1518.49V581.7H1519.27V578.9H1520.05V575.8H1520.83V572.8H1521.61V567.0H1522.39V566.3H1523.17V562.6H1523.95V558.5H1524.73V554.9H1525.51V555.3H1526.29V557.5H1527.07V559.9H1527.85V558.9H1528.63V560.4H1529.41V561.0H1530.97V559.8H1531.75V561.6H1532.53V562.2H1533.31V562.0H1534.09V562.3H1534.87V563.2H1535.65V566.4H1536.43V570.5H1537.21V574.2H1537.99V575.8H1538.77V572.8H1539.55V569.0H1540.33V562.1H1541.11V561.7H1541.89V560.1H1542.67V558.5H1543.45V556.8H1544.23V558.3H1545.01V560.1H1545.78V564.1H1546.56V569.5H1547.34V574.1H1548.12V579.7H1548.90V579.6H1549.68V578.1H1550.46V574.3H1551.24V573.0H1552.02V572.1H1552.80V567.9H1553.58V566.9H1554.36V565.1H1555.14V562.8H1555.92V558.4H1556.70V559.0H1557.48V553.9H1558.26V551.1H1559.04V549.0H1559.82V546.6H1560.60V543.3H1561.38V539.4H1562.16V541.5H1562.94V542.1H1563.72V542.9H1564.50V545.8H1566.06V543.0H1566.84V546.0H1567.62V545.8H1568.40V547.3H1569.18V557.7H1569.96V565.8H1570.74V595.0H1571.52V634.8H1572.30V628.9H1573.08V619.6H1573.86V617.5H1574.64V616.7H1575.42V616.9H1576.20V613.1H1576.98V615.1H1577.76V612.3H1578.54V615.6H1579.32V617.0H1580.10V618.3H1580.88V615.1H1581.66V614.8H1582.44V614.3H1583.22V611.2H1584.00V929.0Z" fill="#ffcc1a"/><path d="M299.50 929.0V927.9H300.28V927.3H317.44V928.6H318.22V929.0ZM392.31 929.0V928.9H393.09V927.8H393.87V926.2H394.65V924.5H395.43V922.7H396.21V920.7H396.99V918.7H397.77V918.9H399.33V918.1H400.11V917.7H401.67V917.9H402.45V916.9H403.23V917.1H404.01V916.6H404.79V915.6H405.57V910.9H406.35V906.0H407.13V903.0H407.91V901.7H408.69V901.6H409.47V900.1H410.25V898.2H411.03V897.9H411.81V897.2H412.59V896.0H413.37V895.5H414.15V895.0H414.93V894.7H415.71V894.3H416.49V894.2H417.27V894.0H418.05V895.6H418.83V897.4H419.61V899.2H420.39V900.5H421.17V902.6H421.95V904.5H422.73V902.6H423.51V900.0H424.29V897.2H425.07V894.8H425.85V891.7H426.63V895.7H427.41V898.5H428.19V898.4H428.97V897.7H429.75V897.4H430.53V897.1H431.31V896.9H432.09V896.3H432.87V894.3H433.65V892.9H434.43V891.6H435.21V891.2H435.99V889.3H436.77V889.0H437.55V887.4H438.33V886.2H439.11V885.5H439.89V884.6H440.67V895.7H441.45V898.2H442.23V898.8H443.01V898.3H443.79V898.4H444.57V898.1H445.35V898.0H446.91V897.4H448.47V896.9H449.25V896.8H450.03V897.1H450.81V896.4H451.59V897.1H452.37V898.1H453.14V898.5H453.92V899.1H454.70V900.8H455.48V901.8H456.26V903.6H457.04V904.2H457.82V904.4H458.60V904.9H459.38V904.0H460.16V903.9H460.94V904.2H461.72V904.1H462.50V904.2H463.28V903.4H464.06V903.6H464.84V902.3H465.62V900.1H466.40V899.2H467.18V897.8H467.96V897.0H468.74V896.4H469.52V895.1H470.30V894.2H471.08V894.0H471.86V893.0H472.64V892.7H473.42V892.9H474.20V893.9H474.98V893.4H475.76V893.3H476.54V891.8H477.32V891.6H478.10V891.3H478.88V891.8H479.66V892.0H480.44V891.4H481.22V891.2H482.00V891.4H482.78V890.9H483.56V890.6H484.34V890.4H485.90V890.2H486.68V888.7H487.46V887.7H488.24V887.0H489.02V886.4H489.80V886.0H490.58V884.9H491.36V884.6H492.14V883.7H492.92V883.2H493.70V882.0H494.48V881.0H495.26V880.9H496.04V880.8H497.60V880.3H498.38V880.7H499.16V880.4H499.94V881.2H500.72V881.5H501.50V882.1H502.28V881.6H503.06V879.6H503.84V878.9H504.62V877.5H505.40V876.4H506.18V875.7H506.96V875.0H507.74V874.2H508.52V873.5H509.30V873.1H510.08V872.7H510.86V872.4H511.64V872.2H512.42V871.3H513.20V871.0H513.98V869.7H514.76V870.9H515.54V869.9H516.32V868.4H517.10V869.0H517.88V868.6H518.66V867.1H519.44V865.7H520.22V870.9H521.00V875.5H521.78V875.3H522.56V874.9H523.34V872.6H524.12V873.2H524.90V870.7H525.68V869.8H526.46V868.6H527.24V868.0H528.02V867.6H528.80V867.7H529.58V868.2H530.36V866.6H531.13V866.1H531.91V865.2H532.69V864.9H533.47V863.8H534.25V863.2H535.03V862.1H535.81V861.8H536.59V859.9H537.37V858.7H538.15V858.3H538.93V857.9H539.71V858.0H540.49V857.0H541.27V858.7H542.05V857.8H542.83V858.7H543.61V858.4H544.39V858.6H545.17V860.0H545.95V860.2H546.73V861.1H547.51V860.4H548.29V861.7H549.07V860.2H549.85V858.7H550.63V864.4H551.41V861.7H552.19V860.7H552.97V859.0H553.75V856.9H554.53V855.8H555.31V857.1H556.09V859.5H556.87V853.4H557.65V848.5H558.43V843.9H559.21V841.3H559.99V838.3H560.77V838.1H561.55V839.4H562.33V838.9H563.11V836.8H563.89V838.7H564.67V843.2H565.45V848.2H566.23V839.5H567.01V836.4H567.79V835.7H568.57V834.0H569.35V831.8H570.13V830.0H570.91V829.7H571.69V828.8H572.47V825.0H573.25V822.6H574.03V817.0H574.81V813.4H575.59V809.7H576.37V803.7H577.15V799.6H577.93V796.7H578.71V791.3H579.49V787.8H580.27V782.9H581.05V779.1H581.83V771.2H582.61V760.3H583.39V749.9H584.17V739.2H584.95V727.8H585.73V718.6H586.51V708.3H587.29V697.2H588.07V692.7H588.85V706.3H589.63V719.4H590.41V723.2H591.19V721.7H591.97V723.7H592.75V721.3H593.53V723.1H594.31V718.6H595.09V713.6H595.87V709.6H596.65V706.7H597.43V706.4H598.21V702.8H598.99V703.9H599.77V705.5H600.55V695.9H601.33V689.5H602.11V680.7H602.89V673.1H603.67V669.1H604.45V663.8H605.23V660.2H606.01V655.3H606.79V653.0H607.57V647.0H608.35V637.2H609.12V634.8H609.90V628.2H610.68V626.3H611.46V623.0H612.24V621.8H613.02V623.4H613.80V622.0H614.58V619.9H615.36V619.8H616.14V619.4H616.92V618.5H617.70V612.6H618.48V600.2H619.26V594.3H620.04V581.3H620.82V566.6H621.60V564.6H622.38V557.7H623.16V559.7H623.94V546.2H624.72V544.9H625.50V540.9H626.28V534.5H627.06V528.6H627.84V526.1H628.62V506.1H629.40V491.7H630.18V471.9H630.96V468.5H631.74V488.9H632.52V508.0H633.30V521.1H634.08V526.2H634.86V526.8H635.64V530.7H636.42V527.7H637.20V518.0H637.98V515.1H638.76V500.5H639.54V465.9H640.32V439.2H641.10V410.6H641.88V393.9H642.66V369.9H643.44V353.5H644.22V338.5H645.00V321.8H645.78V285.8H646.56V228.4H647.34V180.3H648.12V159.2H648.90V161.9H649.68V169.3H650.46V170.2H651.24V209.8H652.02V250.9H652.80V278.0H653.58V290.7H654.36V284.3H655.14V274.7H655.92V281.7H656.70V325.5H657.48V425.8H658.26V440.0H659.04V457.0H659.82V465.7H660.60V474.8H661.38V459.6H662.16V445.0H662.94V431.1H663.72V419.7H664.50V406.7H665.28V396.9H666.06V392.6H666.84V385.7H667.62V376.1H668.40V372.4H669.18V370.3H669.96V373.1H670.74V372.4H671.52V375.0H672.30V382.8H673.08V389.7H673.86V394.3H674.64V393.1H675.42V390.6H676.20V388.4H676.98V384.6H677.76V389.1H678.54V406.1H679.32V423.1H680.10V433.4H680.88V442.7H681.66V450.4H682.44V464.8H683.22V477.0H684.00V483.5H684.78V481.2H685.56V482.0H686.34V481.4H687.12V493.3H687.89V500.3H688.67V509.9H689.45V517.5H690.23V522.3H691.01V520.8H691.79V516.6H692.57V512.1H693.35V501.9H694.13V494.1H694.91V486.0H695.69V475.6H696.47V468.3H697.25V458.6H698.03V448.7H698.81V435.5H699.59V426.7H700.37V415.6H701.15V404.4H701.93V395.4H702.71V386.1H703.49V381.9H704.27V378.5H705.05V374.9H705.83V374.6H706.61V372.2H707.39V370.2H708.17V367.1H708.95V360.8H709.73V353.3H710.51V348.2H711.29V342.4H712.07V335.6H712.85V331.2H713.63V324.6H714.41V325.4H715.19V325.8H715.97V326.2H716.75V327.2H717.53V319.1H718.31V313.3H719.09V303.6H719.87V285.7H720.65V275.5H721.43V274.0H722.21V268.3H722.99V265.3H723.77V261.4H724.55V255.2H725.33V252.3H726.11V248.2H726.89V247.2H727.67V249.0H728.45V246.5H729.23V248.2H730.01V243.3H730.79V244.7H731.57V241.3H732.35V241.0H733.13V242.3H733.91V240.3H734.69V243.2H735.47V243.6H736.25V238.1H737.03V237.3H737.81V231.5H738.59V227.4H739.37V216.5H740.15V201.4H740.93V191.1H741.71V179.7H742.49V182.7H743.27V200.4H744.05V214.1H744.83V221.8H745.61V226.1H746.39V226.5H747.17V233.7H747.95V237.5H748.73V233.6H749.51V230.9H750.29V231.9H751.07V230.8H751.85V235.6H752.63V243.0H753.41V248.9H754.19V251.9H755.75V258.2H756.53V256.7H757.31V260.9H758.09V268.0H758.87V277.5H759.65V290.9H760.43V342.1H761.21V377.4H761.99V377.6H762.77V364.7H763.55V344.4H764.33V340.9H765.10V334.4H765.88V336.1H766.66V333.0H767.44V335.7H768.22V322.6H769.00V306.8H769.78V288.6H770.56V269.8H771.34V239.5H772.12V229.5H772.90V229.6H773.68V227.2H774.46V223.9H775.24V222.4H776.02V224.8H776.80V222.5H777.58V222.0H778.36V221.1H779.14V218.2H779.92V216.3H780.70V214.2H781.48V212.9H782.26V210.7H783.04V243.1H783.82V263.9H784.60V279.9H785.38V276.3H786.16V269.7H786.94V263.7H787.72V253.3H788.50V245.6H789.28V232.3H790.06V226.2H790.84V221.9H791.62V217.6H792.40V215.8H793.18V222.3H793.96V220.0H794.74V220.1H795.52V228.1H796.30V233.0H797.08V242.2H797.86V254.2H798.64V250.0H799.42V246.7H800.20V245.6H800.98V241.9H801.76V239.2H802.54V243.0H803.32V245.1H804.10V247.5H804.88V247.4H805.66V247.0H806.44V249.0H807.22V238.2H808.00V231.2H808.78V229.7H809.56V236.6H810.34V245.3H811.12V242.1H811.90V240.8H812.68V234.6H813.46V227.6H814.24V222.7H815.02V224.3H815.80V228.3H816.58V229.3H817.36V226.9H818.14V232.3H818.92V241.6H819.70V251.3H820.48V257.9H821.26V254.2H822.04V251.1H822.82V247.9H823.60V242.6H824.38V243.4H825.16V238.4H825.94V234.7H826.72V235.0H827.50V233.3H828.28V230.1H829.06V230.4H829.84V234.3H830.62V239.2H831.40V243.5H832.18V254.0H832.96V265.6H833.74V265.2H834.52V265.8H835.30V262.9H836.08V272.4H836.86V282.3H837.64V295.3H838.42V295.1H839.20V295.6H839.98V294.5H840.76V294.9H841.54V292.9H842.32V294.4H843.09V291.3H843.87V287.4H844.65V282.9H845.43V283.6H846.21V288.7H846.99V291.5H847.77V301.3H848.55V319.3H849.33V346.1H850.11V408.4H850.89V427.7H851.67V441.3H852.45V438.9H853.23V440.2H854.01V441.1H854.79V442.3H855.57V441.7H856.35V442.9H857.13V438.4H857.91V435.3H858.69V430.1H859.47V427.1H860.25V422.9H861.03V418.0H861.81V413.0H862.59V406.0H863.37V402.3H864.15V397.3H864.93V391.3H865.71V406.0H866.49V424.0H867.27V438.3H868.05V449.9H868.83V457.3H869.61V469.4H870.39V477.5H871.17V487.0H871.95V496.8H872.73V508.3H873.51V517.8H874.29V528.2H875.07V539.1H875.85V543.8H876.63V542.9H877.41V545.3H878.19V546.8H878.97V548.1H879.75V551.3H880.53V545.4H881.31V544.1H882.09V543.6H882.87V546.5H883.65V546.4H884.43V548.5H885.21V547.2H885.99V550.3H886.77V551.2H887.55V549.5H888.33V552.5H889.11V553.7H889.89V555.1H890.67V554.8H891.45V549.2H892.23V543.0H893.01V538.5H893.79V536.2H894.57V533.1H895.35V529.0H896.13V528.6H896.91V524.8H897.69V528.7H898.47V520.6H899.25V516.4H900.03V513.2H900.81V505.9H901.59V500.7H902.37V498.7H903.15V496.9H903.93V495.9H904.71V491.8H905.49V492.5H906.27V491.0H907.05V490.3H907.83V493.5H908.61V495.2H909.39V495.7H910.17V498.1H911.73V497.2H912.51V496.4H913.29V495.3H914.07V499.0H914.85V496.1H915.63V492.1H916.41V486.3H917.19V482.6H917.97V476.5H918.75V469.5H919.53V459.2H920.31V450.6H921.08V449.4H921.86V449.7H922.64V449.6H923.42V449.7H924.20V453.3H924.98V463.6H925.76V476.2H926.54V483.5H927.32V492.8H928.10V503.2H928.88V511.8H929.66V524.0H930.44V538.7H931.22V554.2H932.00V566.8H932.78V581.2H933.56V609.4H934.34V644.1H935.12V688.1H935.90V691.7H936.68V693.0H938.24V692.3H939.02V691.9H939.80V692.4H940.58V692.2H941.36V692.5H942.14V693.6H942.92V696.4H943.70V697.9H944.48V699.8H945.26V701.4H946.04V706.8H946.82V709.7H947.60V713.8H948.38V717.6H949.16V704.6H949.94V690.2H950.72V674.1H951.50V664.2H952.28V654.8H953.06V648.7H953.84V642.2H954.62V640.7H955.40V636.6H956.18V633.7H956.96V633.2H957.74V645.2H958.52V656.2H959.30V664.9H960.08V678.3H960.86V701.3H961.64V721.2H962.42V740.7H963.20V742.1H963.98V743.8H964.76V745.8H965.54V747.3H966.32V749.5H967.88V748.7H968.66V749.6H969.44V749.9H970.22V751.1H971.00V749.0H971.78V750.8H972.56V751.0H973.34V750.5H974.12V750.1H974.90V751.4H975.68V754.4H976.46V756.7H977.24V760.6H978.02V764.8H978.80V768.7H979.58V771.3H980.36V772.8H981.14V774.7H981.92V777.4H982.70V779.8H984.26V778.2H985.04V773.9H985.82V769.4H986.60V763.0H987.38V761.8H988.16V755.8H988.94V752.6H989.72V754.2H990.50V762.9H991.28V771.5H992.06V772.0H993.62V772.2H994.40V771.4H995.18V771.2H995.96V772.2H996.74V773.2H997.52V773.5H998.30V772.1H999.07V772.8H999.85V773.4H1000.63V759.8H1001.41V741.3H1002.19V725.1H1002.97V718.1H1003.75V715.4H1004.53V713.3H1005.31V711.3H1006.09V708.2H1006.87V705.9H1007.65V705.2H1008.43V708.1H1009.21V712.3H1009.99V715.6H1010.77V719.6H1011.55V723.8H1012.33V727.8H1013.11V732.9H1013.89V735.4H1014.67V740.9H1015.45V743.0H1016.23V743.2H1017.01V744.6H1017.79V745.4H1018.57V746.1H1019.35V744.6H1020.13V743.0H1020.91V744.3H1021.69V741.6H1022.47V743.0H1023.25V742.4H1024.03V741.3H1024.81V741.6H1025.59V741.4H1026.37V740.3H1027.15V739.4H1027.93V737.6H1028.71V736.5H1029.49V735.3H1030.27V733.9H1031.05V734.8H1031.83V738.9H1032.61V746.0H1033.39V752.9H1034.17V759.2H1034.95V765.8H1035.73V767.4H1036.51V768.6H1037.29V769.2H1038.07V770.7H1038.85V771.5H1039.63V772.8H1040.41V772.3H1041.19V770.2H1041.97V768.6H1042.75V770.9H1043.53V771.7H1044.31V775.3H1045.09V776.5H1045.87V777.6H1046.65V779.3H1047.43V779.5H1048.21V777.9H1048.99V777.0H1049.77V775.4H1050.55V774.4H1051.33V774.8H1052.11V776.6H1052.89V777.3H1053.67V778.6H1054.45V782.3H1055.23V780.8H1056.01V782.7H1056.79V781.3H1057.57V782.5H1059.13V783.4H1059.91V785.4H1060.69V785.7H1061.47V787.2H1062.25V783.7H1063.03V783.4H1063.81V781.6H1064.59V779.4H1065.37V774.1H1066.15V769.8H1066.93V768.6H1067.71V767.4H1068.49V767.8H1069.27V772.1H1070.05V785.1H1070.83V784.7H1071.61V786.0H1072.39V788.5H1073.17V789.3H1073.95V791.7H1074.73V796.1H1075.51V803.9H1076.29V806.3H1077.07V805.2H1077.84V804.7H1078.62V806.0H1079.40V811.1H1080.18V813.1H1080.96V814.2H1081.74V812.8H1082.52V814.2H1083.30V815.7H1084.08V815.9H1084.86V817.0H1085.64V817.1H1086.42V818.0H1087.20V816.3H1087.98V811.5H1088.76V809.8H1089.54V808.2H1090.32V808.6H1091.10V808.4H1091.88V808.8H1092.66V810.1H1093.44V815.8H1094.22V822.4H1095.00V820.4H1095.78V820.1H1096.56V818.8H1097.34V819.4H1098.12V818.7H1098.90V818.5H1099.68V818.6H1100.46V819.8H1101.24V818.5H1102.02V820.3H1102.80V821.3H1103.58V823.3H1104.36V824.5H1105.14V824.8H1105.92V824.7H1106.70V825.0H1107.48V824.7H1108.26V825.4H1109.04V824.5H1109.82V826.3H1110.60V824.8H1111.38V825.7H1112.16V826.9H1112.94V827.5H1113.72V828.3H1114.50V828.5H1115.28V828.8H1116.06V829.1H1116.84V829.4H1117.62V829.5H1118.40V830.7H1119.18V828.6H1119.96V827.7H1120.74V828.4H1121.52V827.1H1122.30V826.1H1123.08V825.5H1123.86V824.7H1124.64V821.8H1125.42V820.5H1126.20V820.4H1126.98V818.4H1127.76V818.0H1128.54V817.9H1129.32V817.0H1130.10V815.4H1130.88V815.1H1131.66V815.5H1132.44V813.7H1133.22V814.0H1134.00V813.9H1134.78V813.3H1135.56V813.2H1136.34V813.0H1137.12V811.1H1137.90V812.4H1138.68V809.9H1139.46V810.4H1140.24V809.2H1141.02V808.7H1141.80V807.8H1142.58V807.9H1143.36V805.6H1144.14V806.3H1144.92V805.7H1145.70V804.4H1146.48V804.6H1147.26V804.8H1148.04V807.7H1148.82V809.1H1149.60V809.5H1150.38V811.1H1151.94V808.0H1152.72V806.0H1153.50V803.8H1154.28V803.9H1155.06V803.8H1155.83V803.0H1156.61V803.5H1157.39V801.5H1158.17V800.8H1158.95V801.9H1159.73V802.1H1160.51V801.9H1161.29V802.6H1162.07V800.6H1162.85V801.6H1163.63V802.6H1164.41V804.1H1165.19V805.4H1165.97V806.0H1166.75V807.6H1167.53V806.7H1168.31V807.1H1169.09V805.2H1169.87V808.0H1170.65V809.3H1171.43V809.4H1172.21V806.8H1172.99V803.5H1173.77V801.1H1174.55V804.0H1175.33V801.4H1176.11V796.2H1176.89V792.9H1177.67V791.0H1178.45V787.1H1179.23V786.8H1180.01V791.9H1180.79V792.7H1181.57V796.3H1182.35V799.1H1183.13V798.7H1183.91V800.0H1184.69V799.6H1185.47V799.3H1186.25V797.9H1187.03V798.2H1187.81V798.1H1189.37V797.7H1190.15V796.7H1190.93V797.8H1191.71V797.5H1192.49V795.6H1193.27V797.0H1194.05V797.3H1194.83V796.5H1195.61V796.3H1196.39V795.8H1197.17V794.2H1197.95V791.9H1198.73V792.9H1199.51V792.3H1200.29V794.6H1201.07V794.2H1201.85V794.4H1202.63V795.4H1203.41V795.6H1204.19V796.8H1204.97V799.2H1205.75V797.0H1206.53V799.5H1207.31V799.1H1208.09V798.3H1208.87V797.3H1209.65V797.7H1210.43V799.4H1211.21V799.7H1211.99V800.6H1212.77V800.5H1213.55V798.3H1214.33V799.9H1215.11V800.1H1215.89V798.2H1216.67V798.5H1217.45V798.7H1218.23V798.8H1219.01V799.8H1219.79V799.6H1220.57V800.6H1221.35V799.2H1222.13V801.0H1222.91V799.5H1223.69V799.7H1224.47V799.9H1225.25V798.8H1226.03V798.5H1226.81V797.2H1227.59V794.5H1228.37V792.9H1229.15V792.8H1229.93V793.1H1230.71V793.5H1231.49V792.2H1232.27V793.1H1233.05V792.3H1233.82V793.3H1234.60V792.9H1235.38V793.1H1236.16V790.2H1236.94V790.1H1237.72V789.8H1238.50V789.9H1240.06V792.6H1240.84V794.6H1241.62V795.4H1242.40V797.3H1243.18V798.5H1243.96V796.7H1244.74V797.0H1245.52V797.2H1246.30V797.8H1247.08V797.0H1247.86V796.2H1248.64V792.8H1249.42V793.9H1250.20V793.7H1250.98V790.7H1251.76V789.4H1252.54V788.7H1253.32V789.6H1254.10V788.8H1254.88V789.8H1255.66V789.2H1256.44V788.8H1257.22V788.3H1258.00V789.3H1258.78V788.3H1259.56V788.7H1260.34V789.6H1261.12V786.2H1261.90V783.7H1262.68V783.3H1263.46V783.0H1264.24V780.6H1265.02V780.2H1265.80V777.5H1266.58V776.8H1267.36V773.2H1268.14V772.0H1268.92V770.7H1269.70V771.4H1270.48V775.2H1271.26V774.9H1272.04V777.8H1272.82V780.0H1273.60V780.5H1274.38V781.4H1275.16V783.4H1275.94V784.1H1276.72V783.5H1277.50V783.8H1278.28V784.4H1279.06V783.8H1279.84V784.4H1280.62V784.7H1281.40V783.2H1282.18V785.6H1282.96V785.7H1283.74V784.8H1284.52V785.8H1285.30V788.3H1286.08V787.1H1286.86V786.2H1287.64V784.7H1288.42V787.5H1289.20V785.6H1289.98V785.8H1290.76V784.5H1291.54V783.7H1292.32V784.4H1293.10V783.0H1293.88V784.5H1294.66V785.9H1296.22V798.2H1297.00V799.5H1297.78V799.6H1298.56V800.6H1299.34V800.3H1300.12V801.7H1300.90V802.7H1301.68V801.8H1302.46V801.5H1303.24V802.0H1304.02V802.9H1304.80V803.2H1305.58V802.6H1306.36V803.2H1307.14V804.1H1307.92V804.4H1308.70V803.6H1310.26V803.4H1311.03V802.5H1311.81V803.2H1312.59V802.5H1313.37V801.2H1314.15V802.0H1314.93V800.8H1315.71V801.1H1316.49V801.0H1317.27V799.8H1318.05V800.2H1318.83V799.8H1319.61V801.5H1320.39V800.8H1321.17V801.9H1321.95V801.0H1322.73V801.4H1323.51V801.2H1324.29V800.9H1325.07V799.5H1325.85V797.8H1326.63V799.6H1327.41V798.9H1328.19V799.5H1328.97V798.9H1329.75V799.8H1330.53V799.5H1331.31V801.5H1332.09V802.0H1332.87V801.0H1333.65V800.7H1334.43V801.8H1335.21V801.3H1335.99V801.9H1336.77V800.4H1337.55V799.3H1338.33V800.2H1339.11V800.7H1339.89V801.8H1340.67V802.1H1341.45V801.1H1342.23V800.1H1343.01V801.2H1343.79V800.5H1344.57V799.5H1345.35V799.8H1346.13V798.5H1346.91V797.5H1347.69V795.4H1348.47V794.3H1349.25V793.9H1350.03V791.4H1350.81V791.5H1351.59V791.6H1352.37V789.5H1353.15V790.2H1353.93V789.2H1354.71V787.6H1355.49V788.5H1356.27V786.0H1357.05V785.2H1357.83V784.9H1358.61V785.6H1359.39V785.4H1360.17V784.2H1360.95V784.1H1361.73V785.5H1362.51V784.7H1364.07V784.3H1364.85V783.4H1365.63V782.7H1366.41V781.6H1367.19V781.9H1367.97V780.5H1368.75V779.7H1369.53V780.1H1370.31V780.2H1371.09V779.6H1371.87V778.7H1372.65V778.9H1373.43V780.3H1374.21V776.1H1374.99V775.4H1375.77V774.9H1376.55V773.3H1377.33V770.7H1378.11V770.1H1378.89V769.4H1379.67V768.6H1380.45V769.0H1381.23V768.7H1382.01V766.4H1382.79V767.5H1383.57V767.0H1384.35V766.8H1385.13V765.9H1385.91V764.8H1386.69V765.3H1387.47V765.7H1388.25V766.3H1389.03V766.5H1389.80V765.7H1390.58V766.9H1391.36V763.5H1392.14V763.8H1392.92V761.3H1393.70V759.2H1394.48V759.9H1395.26V758.0H1396.04V756.9H1396.82V756.0H1397.60V755.6H1398.38V754.7H1399.16V754.5H1399.94V755.0H1400.72V754.0H1401.50V755.1H1402.28V753.5H1403.06V752.4H1403.84V752.8H1404.62V754.2H1406.96V754.5H1407.74V753.9H1408.52V753.7H1409.30V755.0H1410.86V753.5H1411.64V752.1H1412.42V750.5H1413.20V751.4H1413.98V751.7H1414.76V752.0H1415.54V754.1H1416.32V755.4H1417.10V756.8H1417.88V757.3H1418.66V760.5H1419.44V760.9H1420.22V762.9H1421.00V760.9H1421.78V761.1H1422.56V761.4H1423.34V762.1H1424.12V761.5H1424.90V760.9H1425.68V759.5H1426.46V759.6H1427.24V758.6H1428.02V756.7H1428.80V757.3H1429.58V755.2H1430.36V754.6H1431.14V752.6H1431.92V748.3H1432.70V745.6H1433.48V745.2H1434.26V743.8H1435.04V741.2H1435.82V738.2H1436.60V738.8H1437.38V736.6H1438.16V732.8H1438.94V732.1H1439.72V729.0H1440.50V726.7H1441.28V724.6H1442.06V722.7H1442.84V721.0H1443.62V721.7H1444.40V718.9H1445.18V715.4H1445.96V713.4H1446.74V708.7H1447.52V707.2H1448.30V703.7H1449.08V700.3H1449.86V697.1H1450.64V692.7H1451.42V687.6H1452.20V684.0H1452.98V679.9H1453.76V675.8H1454.54V670.4H1455.32V665.1H1456.10V662.4H1456.88V659.5H1457.66V658.1H1458.44V655.9H1459.22V654.0H1460.00V660.6H1460.78V666.1H1461.56V670.4H1462.34V674.9H1463.12V678.7H1463.90V683.4H1464.68V689.2H1465.46V695.1H1466.24V690.3H1467.02V683.0H1467.79V679.2H1468.57V671.9H1469.35V666.2H1470.13V664.1H1470.91V662.0H1471.69V661.2H1472.47V659.0H1473.25V662.1H1474.03V663.7H1474.81V670.0H1475.59V674.6H1476.37V668.8H1477.15V663.1H1477.93V658.7H1478.71V660.3H1479.49V663.8H1480.27V667.4H1481.05V669.3H1481.83V674.0H1482.61V677.8H1483.39V681.1H1484.17V686.4H1484.95V688.3H1485.73V691.5H1486.51V694.0H1487.29V696.2H1488.07V699.1H1488.85V693.1H1489.63V689.5H1490.41V684.8H1491.19V678.4H1491.97V675.1H1492.75V680.8H1493.53V682.2H1494.31V683.2H1495.09V688.9H1496.65V688.3H1497.43V686.7H1498.21V683.7H1498.99V685.1H1499.77V684.4H1500.55V680.0H1501.33V683.4H1502.11V682.3H1502.89V682.9H1503.67V679.3H1504.45V679.9H1505.23V675.7H1506.01V674.3H1506.79V674.6H1507.57V672.2H1508.35V671.9H1509.13V670.9H1509.91V667.7H1510.69V664.1H1511.47V660.1H1512.25V653.7H1513.03V648.6H1513.81V645.4H1514.59V642.0H1515.37V638.6H1516.15V632.9H1516.93V628.3H1517.71V624.9H1518.49V619.6H1519.27V618.3H1520.05V616.4H1520.83V612.7H1521.61V607.1H1522.39V605.7H1523.17V601.9H1523.95V598.0H1524.73V593.5H1525.51V593.7H1526.29V594.1H1527.07V597.6H1527.85V598.0H1528.63V598.6H1529.41V600.1H1530.97V600.7H1532.53V600.8H1533.31V601.7H1534.09V602.6H1534.87V602.8H1535.65V605.5H1536.43V607.8H1537.21V610.2H1537.99V611.0H1538.77V608.8H1539.55V606.3H1540.33V601.5H1541.11V601.3H1541.89V599.8H1542.67V598.1H1543.45V595.3H1544.23V595.4H1545.01V597.8H1545.78V602.1H1546.56V607.4H1547.34V614.1H1548.12V618.9H1548.90V618.4H1549.68V617.2H1550.46V615.2H1551.24V612.9H1552.02V612.5H1552.80V607.4H1553.58V605.8H1554.36V604.8H1555.14V603.0H1555.92V598.9H1556.70V599.2H1557.48V595.1H1558.26V592.0H1559.04V591.1H1559.82V588.9H1560.60V586.6H1561.38V582.4H1562.16V583.2H1562.94V583.0H1563.72V582.2H1564.50V586.4H1565.28V585.4H1566.06V584.0H1566.84V585.8H1567.62V586.2H1568.40V588.3H1569.18V597.8H1569.96V605.6H1570.74V629.9H1571.52V664.8H1572.30V659.2H1573.08V650.9H1573.86V648.1H1574.64V646.4H1575.42V648.9H1576.20V646.3H1576.98V647.2H1577.76V644.7H1578.54V648.2H1579.32V648.8H1580.10V647.9H1580.88V646.0H1581.66V643.9H1582.44V641.6H1583.22V637.8H1584.00V929.0Z" fill="#1f49ff"/><path d="M299.50 929.0V927.9H300.28V927.3H317.44V928.6H318.22V929.0ZM392.31 929.0V928.9H393.09V927.8H393.87V926.2H394.65V924.5H395.43V922.7H396.21V920.7H396.99V918.7H397.77V918.9H399.33V918.1H400.11V917.7H401.67V917.9H402.45V916.9H403.23V917.1H404.01V916.6H404.79V915.6H405.57V910.9H406.35V906.0H407.13V903.0H407.91V901.7H408.69V901.6H409.47V900.1H410.25V898.2H411.03V897.9H411.81V897.2H412.59V896.0H413.37V895.5H414.15V895.0H414.93V894.7H415.71V894.3H416.49V894.2H417.27V894.0H418.05V895.6H418.83V897.4H419.61V899.2H420.39V900.5H421.17V902.6H421.95V904.5H422.73V902.6H423.51V900.0H424.29V897.2H425.07V894.8H425.85V891.7H426.63V895.7H427.41V898.5H428.19V898.4H428.97V897.7H429.75V897.4H430.53V897.1H431.31V896.9H432.09V896.3H432.87V894.3H433.65V892.9H434.43V891.6H435.21V891.2H435.99V889.3H436.77V889.0H437.55V887.4H438.33V886.2H439.11V885.5H439.89V884.6H440.67V895.7H441.45V898.2H442.23V898.8H443.01V898.3H443.79V898.4H444.57V898.1H445.35V898.0H446.91V897.4H448.47V896.9H449.25V896.8H450.03V897.1H450.81V896.4H451.59V897.1H452.37V898.1H453.14V898.5H453.92V899.1H454.70V900.8H455.48V901.8H456.26V903.6H457.04V904.2H457.82V904.4H458.60V904.9H459.38V904.0H460.16V903.9H460.94V904.2H461.72V904.1H462.50V904.2H463.28V903.4H464.06V903.6H464.84V902.3H465.62V900.1H466.40V899.2H467.18V897.8H467.96V897.0H468.74V896.4H469.52V895.1H470.30V894.2H471.08V894.0H471.86V893.0H472.64V892.7H473.42V892.9H474.20V893.9H474.98V893.4H475.76V893.3H476.54V891.8H477.32V891.6H478.10V891.3H478.88V891.8H479.66V892.0H480.44V891.4H481.22V891.2H482.00V891.4H482.78V890.9H483.56V890.6H484.34V890.4H485.90V890.2H486.68V888.7H487.46V887.7H488.24V887.0H489.02V886.4H489.80V886.0H490.58V884.9H491.36V884.6H492.14V883.7H492.92V883.2H493.70V882.0H494.48V881.0H495.26V880.9H496.04V880.8H497.60V880.3H498.38V880.7H499.16V880.4H499.94V881.2H500.72V881.5H501.50V882.1H502.28V881.6H503.06V879.6H503.84V878.9H504.62V877.5H505.40V876.4H506.18V875.7H506.96V875.0H507.74V874.2H508.52V873.5H509.30V873.1H510.08V872.7H510.86V872.4H511.64V872.2H512.42V871.3H513.20V871.0H513.98V869.7H514.76V870.9H515.54V869.9H516.32V868.4H517.10V869.0H517.88V868.6H518.66V867.1H519.44V865.7H520.22V870.9H521.00V875.5H521.78V875.3H522.56V874.9H523.34V872.6H524.12V873.2H524.90V872.5H525.68V871.5H526.46V870.3H527.24V869.7H528.02V869.2H528.80V869.3H529.58V869.7H530.36V868.1H531.13V867.6H531.91V866.7H532.69V866.4H533.47V865.3H534.25V864.7H535.03V863.6H535.81V863.3H536.59V861.4H537.37V860.2H538.15V859.8H538.93V859.4H539.71V859.5H540.49V858.5H541.27V860.2H542.05V859.3H542.83V860.2H543.61V859.9H544.39V860.1H545.17V861.5H545.95V861.7H546.73V862.6H547.51V861.9H548.29V863.2H549.07V861.7H549.85V860.2H550.63V865.9H551.41V863.2H552.19V862.2H552.97V860.5H553.75V858.4H554.53V857.3H555.31V858.8H556.09V861.2H556.87V855.0H557.65V850.0H558.43V845.4H559.21V842.8H559.99V839.9H560.77V839.7H561.55V840.9H562.33V840.5H563.11V838.4H563.89V840.4H564.67V844.7H565.45V849.7H566.23V841.1H567.01V838.1H567.79V837.6H568.57V836.0H569.35V833.9H570.13V832.2H570.91V832.1H571.69V831.2H572.47V827.6H573.25V825.5H574.03V820.1H574.81V817.4H575.59V814.2H576.37V809.0H577.15V804.3H577.93V801.9H578.71V795.9H579.49V792.7H580.27V789.3H581.05V788.1H581.83V787.2H582.61V783.7H583.39V780.9H584.17V777.9H584.95V775.8H585.73V774.4H586.51V772.7H587.29V771.4H588.07V769.8H588.85V768.6H589.63V767.0H590.41V767.1H591.19V763.4H591.97V761.8H592.75V758.7H593.53V758.9H594.31V757.9H595.09V754.9H595.87V752.8H596.65V749.3H597.43V747.3H598.21V742.0H598.99V739.7H599.77V738.5H600.55V735.4H601.33V732.5H602.11V731.1H602.89V729.4H603.67V728.5H604.45V727.0H605.23V724.7H606.01V721.9H606.79V721.6H607.57V719.2H608.35V714.7H609.12V714.1H609.90V710.9H611.46V710.4H612.24V709.9H613.02V710.3H613.80V709.2H614.58V709.6H615.36V708.7H616.14V706.0H616.92V704.9H617.70V702.7H618.48V698.6H619.26V696.6H620.04V693.4H620.82V688.5H621.60V686.2H622.38V681.7H623.16V679.3H623.94V673.5H624.72V672.4H625.50V668.0H626.28V667.4H627.06V663.4H627.84V658.6H628.62V648.2H629.40V641.8H630.18V631.5H630.96V621.1H631.74V638.5H632.52V658.4H633.30V661.8H634.08V653.9H634.86V641.8H635.64V629.5H636.42V617.5H637.20V601.9H637.98V582.8H638.76V556.9H639.54V530.8H640.32V517.1H641.10V498.4H641.88V493.4H642.66V480.2H643.44V471.3H644.22V464.3H645.00V455.0H645.78V443.6H646.56V435.8H647.34V428.2H648.12V419.7H648.90V414.1H649.68V408.2H650.46V405.7H651.24V400.8H652.02V400.1H652.80V398.4H653.58V396.1H654.36V391.8H655.14V379.1H655.92V384.3H656.70V412.1H657.48V442.6H658.26V471.4H659.04V497.8H659.82V522.3H660.60V515.7H661.38V501.3H662.16V483.7H662.94V467.2H663.72V451.0H664.50V441.7H665.28V436.7H666.06V432.1H666.84V425.5H667.62V420.6H668.40V419.0H669.18V415.5H669.96V414.7H670.74V412.6H671.52V413.8H672.30V422.3H673.08V430.0H673.86V433.2H674.64V425.4H675.42V418.2H676.20V410.6H676.98V415.7H677.76V422.4H678.54V428.3H679.32V441.5H680.10V455.0H680.88V468.8H681.66V482.6H682.44V498.0H683.22V509.5H684.00V517.4H684.78V518.3H685.56V519.9H686.34V522.0H687.12V529.2H687.89V531.7H688.67V536.9H689.45V535.4H690.23V533.5H691.01V530.7H691.79V528.6H692.57V526.1H693.35V515.8H694.13V509.3H694.91V501.9H695.69V493.5H696.47V485.8H697.25V477.8H698.03V468.7H698.81V456.6H699.59V447.5H700.37V439.8H701.15V433.5H701.93V426.5H702.71V421.1H703.49V416.8H704.27V413.9H705.05V409.7H705.83V409.0H706.61V405.3H707.39V402.6H708.17V398.2H708.95V391.2H709.73V381.9H710.51V378.1H711.29V371.9H712.07V371.5H712.85V370.6H713.63V369.8H714.41V367.1H715.19V362.6H715.97V357.9H716.75V356.1H717.53V351.1H718.31V342.8H719.09V334.4H719.87V325.4H720.65V319.7H721.43V318.6H722.21V313.4H722.99V312.2H723.77V308.7H724.55V305.1H725.33V301.2H726.11V299.1H726.89V295.8H727.67V296.9H728.45V295.1H729.23V294.6H730.01V291.3H730.79V291.9H731.57V289.1H732.35V289.7H733.13V290.8H733.91V290.1H734.69V290.9H735.47V289.5H736.25V288.0H737.03V279.4H737.81V267.9H738.59V256.3H739.37V247.4H740.15V241.5H740.93V237.1H741.71V232.7H742.49V241.6H743.27V250.1H744.05V254.1H744.83V260.8H745.61V265.9H746.39V268.4H747.17V274.3H747.95V279.7H748.73V277.1H749.51V273.4H750.29V273.7H751.07V272.1H751.85V275.7H752.63V282.0H753.41V287.4H754.19V290.9H754.97V292.2H755.75V298.6H756.53V298.2H757.31V306.2H758.09V308.7H758.87V311.2H759.65V338.8H760.43V367.2H761.21V392.4H761.99V398.2H762.77V389.3H763.55V377.5H764.33V372.5H765.10V365.2H765.88V361.8H766.66V356.3H767.44V353.9H768.22V346.0H769.00V341.7H769.78V323.6H770.56V307.9H771.34V288.2H772.12V279.6H772.90V279.4H773.68V278.0H774.46V272.5H775.24V271.1H776.02V271.5H776.80V267.2H777.58V267.5H778.36V264.7H779.14V264.3H779.92V261.3H780.70V259.7H781.48V258.0H782.26V253.7H783.04V306.2H783.82V335.1H784.60V317.3H785.38V304.0H786.16V297.5H786.94V294.2H787.72V287.8H788.50V284.5H789.28V278.7H790.06V276.7H790.84V275.8H791.62V273.8H792.40V270.1H793.18V273.1H793.96V274.5H794.74V277.6H795.52V282.4H796.30V283.4H797.08V285.6H797.86V290.1H798.64V290.2H799.42V290.8H800.20V289.4H800.98V287.7H801.76V285.0H802.54V283.0H803.32V281.2H804.10V281.4H804.88V282.3H805.66V283.0H806.44V286.4H807.22V278.6H808.00V273.7H808.78V271.2H809.56V271.3H810.34V274.3H811.90V279.0H812.68V278.1H813.46V276.2H814.24V274.8H815.02V275.8H815.80V277.4H816.58V277.5H817.36V278.7H818.14V285.0H818.92V291.0H819.70V295.2H820.48V297.5H821.26V293.2H822.04V291.6H822.82V286.9H823.60V283.1H824.38V281.5H825.16V278.0H825.94V275.3H826.72V273.9H827.50V271.7H828.28V266.1H829.06V268.1H829.84V271.4H830.62V276.3H831.40V281.6H832.18V288.0H832.96V293.1H833.74V294.9H834.52V298.0H835.30V300.3H836.08V309.3H836.86V314.9H837.64V323.2H838.42V324.5H839.20V329.2H839.98V332.5H840.76V334.8H841.54V336.5H842.32V340.0H843.09V336.3H843.87V333.9H844.65V331.9H845.43V328.7H846.21V332.7H846.99V333.3H847.77V337.6H848.55V351.0H849.33V374.1H850.11V431.2H850.89V449.7H851.67V458.5H852.45V464.8H853.23V470.5H854.01V467.9H854.79V465.7H855.57V461.5H856.35V461.0H857.13V457.7H857.91V453.5H858.69V448.1H859.47V445.0H860.25V438.1H861.03V434.8H861.81V431.1H862.59V427.0H863.37V425.0H864.15V421.9H864.93V416.5H865.71V415.4H866.49V430.4H867.27V445.5H868.05V462.5H868.83V469.0H869.61V479.4H870.39V487.3H871.17V496.6H871.95V507.0H872.73V519.7H873.51V531.0H874.29V542.6H875.07V544.7H875.85V550.3H876.63V558.8H877.41V574.0H878.19V585.6H878.97V582.3H879.75V580.5H880.53V574.8H881.31V573.2H882.09V574.0H882.87V574.8H883.65V575.3H884.43V576.7H885.21V576.8H885.99V578.9H886.77V579.5H887.55V578.5H888.33V580.0H889.11V580.4H889.89V574.4H890.67V570.7H891.45V565.2H892.23V560.0H893.01V556.2H893.79V553.9H894.57V550.6H895.35V545.4H896.13V543.8H896.91V537.7H897.69V537.6H898.47V533.2H899.25V532.2H900.03V531.0H900.81V526.7H901.59V524.2H902.37V523.6H903.15V522.4H903.93V524.0H904.71V521.2H905.49V522.6H906.27V519.8H907.05V517.3H907.83V520.0H908.61V522.0H909.39V522.7H910.17V525.7H910.95V525.4H911.73V525.2H912.51V525.5H913.29V523.8H914.07V526.1H914.85V526.8H915.63V525.1H916.41V520.8H917.19V513.8H917.97V505.0H918.75V498.7H919.53V490.9H920.31V481.5H921.08V476.1H921.86V475.3H922.64V476.0H923.42V477.0H924.20V477.7H924.98V481.2H925.76V493.0H926.54V502.0H927.32V511.2H928.10V522.2H928.88V530.3H929.66V543.0H930.44V558.0H931.22V572.9H932.00V585.5H932.78V601.2H933.56V630.7H934.34V675.4H935.12V704.7H935.90V704.3H936.68V705.2H937.46V705.6H938.24V704.7H939.02V704.9H940.58V705.8H941.36V706.4H942.14V706.7H942.92V710.8H943.70V711.7H944.48V714.5H945.26V716.3H946.04V722.5H946.82V726.8H947.60V731.4H948.38V736.6H949.16V722.0H949.94V705.3H950.72V687.5H951.50V676.1H952.28V667.1H953.06V659.7H953.84V653.8H954.62V652.7H955.40V649.1H956.18V646.0H956.96V647.4H957.74V657.6H958.52V668.5H959.30V676.6H960.08V691.0H960.86V713.5H961.64V734.3H962.42V752.8H963.20V754.3H963.98V755.0H964.76V757.1H965.54V757.7H966.32V759.5H967.10V760.0H967.88V758.7H968.66V759.8H969.44V760.7H971.00V759.6H971.78V760.8H973.34V760.7H974.12V760.6H974.90V761.5H975.68V764.5H976.46V766.9H977.24V770.5H978.02V774.2H978.80V777.5H979.58V779.8H980.36V781.8H981.14V785.0H981.92V788.5H982.70V791.5H983.48V792.6H984.26V789.9H985.04V785.2H985.82V780.3H986.60V774.7H987.38V771.9H988.16V766.6H988.94V767.3H989.72V773.5H990.50V780.3H991.28V785.7H992.06V786.2H992.84V785.8H993.62V787.1H994.40V786.3H995.18V786.4H995.96V786.7H996.74V786.5H997.52V786.3H998.30V784.6H999.07V784.3H999.85V784.0H1000.63V771.9H1001.41V757.4H1002.19V743.8H1002.97V736.1H1003.75V732.2H1004.53V729.7H1005.31V725.9H1006.09V722.4H1006.87V718.0H1007.65V716.4H1008.43V719.6H1009.21V722.9H1009.99V726.4H1010.77V730.1H1011.55V733.2H1012.33V737.9H1013.11V742.4H1013.89V745.3H1014.67V750.7H1015.45V752.7H1016.23V753.0H1017.01V754.2H1017.79V755.6H1018.57V756.5H1019.35V756.4H1020.13V754.8H1020.91V755.1H1021.69V753.2H1022.47V754.4H1023.25V753.7H1024.03V753.1H1024.81V753.5H1025.59V752.6H1026.37V751.3H1027.15V750.7H1027.93V748.8H1028.71V749.0H1029.49V748.4H1030.27V747.3H1031.05V748.3H1031.83V752.4H1032.61V759.1H1033.39V765.3H1034.17V770.8H1034.95V777.5H1035.73V779.2H1036.51V780.7H1037.29V781.7H1038.07V782.5H1038.85V783.6H1039.63V784.9H1040.41V784.2H1041.19V783.5H1041.97V781.9H1042.75V783.1H1043.53V783.6H1044.31V785.5H1045.09V787.4H1045.87V788.8H1046.65V790.2H1047.43V790.8H1048.21V790.4H1048.99V790.6H1049.77V790.4H1050.55V790.8H1051.33V791.8H1052.11V792.9H1052.89V794.1H1053.67V795.1H1054.45V798.5H1055.23V797.6H1056.01V798.6H1056.79V798.0H1057.57V799.3H1058.35V800.3H1059.13V800.7H1059.91V802.6H1060.69V802.9H1061.47V803.5H1062.25V801.5H1063.03V801.0H1063.81V799.7H1064.59V798.1H1065.37V794.2H1066.15V790.4H1066.93V787.7H1067.71V785.3H1068.49V783.8H1069.27V791.9H1070.05V801.6H1070.83V807.0H1071.61V812.8H1072.39V814.2H1073.17V814.3H1073.95V815.5H1074.73V817.8H1075.51V822.7H1076.29V822.9H1077.07V822.2H1077.84V822.0H1078.62V822.8H1079.40V827.1H1080.18V830.9H1080.96V831.3H1081.74V831.7H1083.30V832.3H1084.08V833.2H1084.86V833.1H1085.64V833.6H1086.42V834.0H1087.20V834.8H1087.98V836.5H1089.54V838.4H1090.32V838.5H1091.10V837.6H1091.88V837.3H1092.66V838.0H1093.44V837.9H1095.00V837.8H1095.78V837.9H1096.56V837.5H1097.34V839.2H1098.12V839.3H1098.90V840.5H1099.68V840.1H1101.24V840.4H1102.02V841.0H1102.80V840.5H1103.58V841.2H1104.36V840.7H1105.14V840.3H1105.92V839.3H1106.70V839.5H1107.48V838.7H1108.26V839.3H1109.04V839.1H1109.82V840.4H1110.60V840.1H1111.38V839.6H1112.16V841.5H1112.94V841.6H1113.72V841.9H1114.50V843.1H1115.28V842.8H1116.06V842.4H1116.84V842.5H1117.62V842.9H1118.40V843.0H1119.18V842.6H1119.96V842.1H1120.74V842.9H1121.52V842.2H1122.30V841.0H1123.08V840.0H1123.86V839.8H1124.64V838.7H1125.42V837.9H1126.20V837.2H1126.98V835.9H1127.76V835.2H1128.54V834.6H1129.32V833.1H1130.10V832.9H1130.88V832.3H1131.66V833.0H1132.44V832.0H1133.22V831.4H1134.00V831.5H1134.78V831.0H1135.56V830.5H1136.34V830.3H1137.12V829.0H1137.90V830.3H1138.68V829.1H1139.46V829.0H1140.24V828.5H1141.02V827.2H1141.80V826.8H1142.58V826.6H1143.36V825.2H1144.14V825.3H1144.92V824.4H1145.70V823.5H1146.48V823.1H1147.26V822.6H1148.04V824.4H1148.82V825.1H1149.60V826.0H1150.38V826.2H1151.16V824.7H1151.94V822.5H1152.72V820.5H1154.28V819.6H1155.06V819.9H1155.83V820.4H1157.39V820.5H1158.17V819.9H1158.95V820.3H1159.73V820.0H1162.07V819.8H1163.63V819.9H1164.41V820.6H1165.19V821.9H1165.97V822.6H1166.75V823.1H1167.53V824.2H1168.31V825.7H1169.09V826.3H1169.87V827.0H1170.65V827.1H1171.43V827.5H1172.21V822.9H1172.99V816.9H1173.77V818.7H1174.55V820.6H1175.33V819.4H1176.11V818.1H1176.89V816.9H1177.67V815.7H1178.45V814.4H1179.23V815.0H1180.01V815.1H1180.79V814.0H1181.57V815.6H1182.35V814.6H1183.13V814.1H1183.91V815.1H1184.69V815.4H1185.47V815.6H1186.25V814.6H1187.03V815.3H1187.81V814.9H1189.37V814.6H1190.15V814.5H1190.93V815.1H1191.71V814.6H1192.49V813.1H1193.27V814.1H1194.05V813.8H1194.83V813.0H1195.61V813.4H1196.39V813.1H1197.17V811.8H1197.95V811.3H1198.73V812.3H1199.51V812.0H1200.29V813.0H1201.07V813.5H1201.85V813.3H1202.63V813.4H1203.41V814.4H1204.19V815.2H1204.97V816.1H1205.75V815.4H1206.53V816.0H1207.31V815.6H1208.09V815.0H1208.87V814.3H1209.65V814.1H1210.43V815.1H1211.21V815.8H1211.99V815.9H1212.77V816.0H1213.55V814.4H1214.33V814.7H1215.11V813.8H1215.89V813.2H1216.67V813.3H1217.45V813.8H1218.23V813.4H1219.01V813.2H1219.79V812.7H1220.57V814.2H1221.35V813.1H1222.13V814.2H1222.91V814.6H1223.69V814.3H1225.25V813.3H1226.03V812.5H1226.81V812.0H1227.59V810.2H1228.37V808.9H1229.15V808.6H1229.93V808.5H1231.49V808.1H1232.27V808.5H1233.05V807.1H1234.60V807.4H1236.16V806.3H1236.94V805.9H1237.72V804.8H1238.50V804.2H1239.28V804.7H1240.06V806.1H1240.84V806.5H1241.62V807.8H1242.40V809.1H1243.18V810.1H1243.96V809.2H1244.74V810.8H1245.52V810.9H1246.30V811.3H1247.08V810.5H1247.86V810.0H1248.64V806.8H1249.42V806.4H1250.20V805.8H1250.98V804.4H1251.76V802.8H1252.54V803.1H1253.32V803.5H1254.10V803.1H1254.88V802.9H1255.66V802.7H1256.44V802.8H1257.22V802.2H1258.00V802.6H1258.78V802.2H1259.56V802.0H1260.34V803.0H1261.12V801.2H1261.90V799.8H1262.68V799.9H1263.46V799.3H1264.24V798.8H1265.02V798.9H1265.80V796.2H1266.58V794.8H1267.36V793.6H1268.14V792.9H1268.92V791.5H1269.70V790.9H1270.48V793.6H1271.26V793.5H1272.04V795.2H1272.82V796.4H1273.60V795.8H1274.38V796.3H1275.16V797.5H1275.94V798.7H1276.72V798.1H1277.50V799.4H1278.28V800.1H1279.06V800.8H1279.84V801.8H1280.62V801.7H1281.40V801.9H1282.18V802.9H1282.96V803.6H1283.74V802.7H1284.52V803.6H1285.30V804.1H1286.08V804.9H1286.86V804.7H1287.64V803.9H1288.42V805.2H1289.20V804.7H1289.98V805.7H1290.76V804.7H1291.54V805.2H1292.32V804.7H1293.10V804.4H1293.88V805.7H1294.66V806.0H1295.44V806.7H1296.22V815.9H1297.00V817.1H1297.78V817.5H1298.56V817.4H1299.34V817.3H1300.12V817.0H1300.90V816.5H1301.68V816.4H1302.46V815.8H1303.24V815.2H1304.80V815.8H1305.58V815.6H1306.36V814.9H1307.14V815.1H1308.70V815.2H1309.48V814.1H1310.26V814.0H1311.03V813.4H1311.81V814.0H1312.59V812.5H1313.37V811.9H1314.15V812.8H1314.93V811.6H1315.71V812.2H1316.49V811.5H1317.27V810.8H1318.05V811.1H1318.83V811.2H1319.61V812.3H1320.39V811.7H1321.17V812.1H1321.95V811.5H1322.73V811.7H1323.51V811.5H1324.29V811.4H1325.07V810.0H1325.85V808.7H1326.63V810.0H1327.41V810.7H1328.19V810.4H1328.97V809.7H1329.75V810.2H1330.53V810.6H1331.31V811.9H1332.09V813.2H1332.87V812.6H1333.65V812.4H1334.43V813.3H1335.21V812.5H1336.77V812.4H1337.55V811.5H1338.33V812.4H1339.11V812.8H1339.89V813.3H1340.67V813.2H1341.45V812.9H1342.23V812.2H1343.01V812.6H1343.79V813.0H1344.57V811.6H1345.35V811.7H1346.13V809.9H1346.91V809.0H1347.69V807.0H1348.47V806.2H1349.25V805.0H1350.03V803.7H1350.81V803.4H1351.59V803.0H1352.37V802.1H1353.15V802.3H1353.93V802.8H1354.71V801.8H1355.49V801.9H1356.27V800.7H1357.05V800.4H1357.83V800.8H1359.39V801.7H1360.17V800.4H1360.95V800.2H1361.73V800.7H1362.51V799.8H1363.29V798.8H1364.07V798.1H1364.85V797.4H1365.63V796.3H1366.41V795.8H1367.19V796.0H1367.97V794.8H1368.75V793.3H1369.53V793.6H1370.31V793.2H1371.09V791.6H1371.87V791.0H1373.43V792.1H1374.21V789.1H1374.99V789.6H1375.77V788.9H1376.55V787.4H1377.33V786.4H1378.11V785.8H1378.89V786.6H1379.67V785.1H1380.45V785.7H1381.23V785.2H1382.01V783.3H1382.79V784.0H1383.57V783.3H1384.35V783.6H1385.13V782.4H1385.91V782.5H1386.69V781.4H1387.47V782.1H1389.03V781.7H1389.80V782.5H1390.58V781.9H1391.36V781.0H1392.14V780.5H1392.92V779.6H1394.48V778.9H1395.26V778.3H1396.04V779.6H1396.82V778.6H1397.60V778.0H1398.38V777.5H1399.16V776.8H1399.94V778.0H1400.72V777.9H1401.50V777.8H1402.28V776.5H1403.06V776.2H1403.84V777.1H1404.62V777.0H1405.40V777.5H1406.18V777.0H1406.96V777.3H1407.74V776.7H1408.52V775.3H1409.30V774.8H1410.08V773.5H1410.86V771.9H1411.64V770.5H1412.42V769.3H1413.20V769.1H1413.98V769.2H1414.76V769.7H1415.54V771.6H1416.32V772.5H1417.10V774.1H1417.88V775.6H1418.66V777.5H1420.22V778.6H1421.00V776.9H1421.78V776.0H1422.56V776.4H1423.34V775.3H1424.12V774.6H1424.90V773.6H1425.68V772.4H1426.46V771.6H1427.24V772.4H1428.02V770.2H1428.80V771.2H1429.58V769.4H1430.36V769.6H1431.14V769.0H1431.92V764.9H1432.70V764.7H1433.48V764.6H1434.26V762.7H1435.04V760.6H1435.82V759.2H1436.60V759.1H1437.38V757.2H1438.16V755.6H1438.94V754.0H1439.72V751.8H1440.50V749.7H1441.28V748.2H1442.06V747.0H1442.84V745.2H1444.40V743.2H1445.18V740.3H1445.96V738.6H1446.74V734.6H1447.52V732.9H1448.30V729.5H1449.08V726.7H1449.86V722.9H1450.64V719.8H1451.42V715.2H1452.20V712.2H1452.98V709.7H1453.76V707.4H1454.54V704.2H1455.32V700.8H1456.10V698.8H1456.88V695.9H1457.66V696.5H1458.44V694.2H1459.22V691.8H1460.00V695.6H1460.78V698.3H1461.56V700.8H1462.34V704.2H1463.12V707.0H1463.90V703.1H1464.68V701.4H1465.46V699.0H1466.24V697.6H1467.02V694.4H1467.79V694.0H1468.57V691.3H1469.35V689.2H1470.13V686.7H1470.91V685.1H1471.69V683.5H1472.47V684.1H1473.25V686.9H1474.03V686.8H1474.81V688.1H1475.59V690.1H1476.37V689.8H1477.15V688.0H1477.93V689.0H1478.71V687.1H1479.49V689.0H1480.27V693.4H1481.05V696.8H1481.83V702.0H1482.61V705.4H1483.39V707.1H1484.17V708.8H1484.95V707.0H1485.73V708.3H1486.51V709.5H1487.29V710.4H1488.07V712.3H1488.85V711.9H1489.63V712.1H1490.41V712.5H1491.19V709.8H1491.97V707.7H1492.75V709.8H1493.53V709.3H1494.31V711.1H1495.09V714.0H1495.87V714.5H1496.65V717.4H1497.43V716.1H1498.21V713.8H1498.99V713.6H1499.77V712.7H1500.55V710.8H1501.33V711.1H1502.11V709.4H1502.89V710.3H1503.67V707.9H1504.45V707.7H1505.23V704.9H1506.01V703.5H1506.79V704.6H1507.57V699.7H1508.35V697.1H1509.13V694.6H1509.91V689.3H1510.69V686.9H1511.47V684.2H1512.25V680.6H1513.03V678.6H1513.81V674.3H1514.59V672.1H1515.37V668.8H1516.15V664.7H1516.93V660.7H1517.71V657.9H1518.49V654.8H1519.27V652.5H1520.05V650.0H1520.83V647.3H1521.61V642.7H1522.39V640.8H1523.17V639.3H1523.95V636.2H1524.73V633.1H1525.51V631.2H1526.29V631.4H1527.07V632.0H1527.85V632.7H1528.63V633.3H1529.41V634.4H1530.19V633.1H1530.97V632.7H1531.75V631.4H1532.53V630.6H1533.31V631.0H1534.09V631.5H1534.87V631.7H1535.65V635.1H1536.43V638.1H1537.21V638.8H1537.99V640.5H1538.77V638.6H1539.55V635.5H1540.33V631.3H1541.11V630.3H1541.89V627.8H1542.67V626.2H1543.45V624.3H1544.23V623.7H1545.01V625.6H1545.78V629.5H1546.56V633.2H1547.34V639.1H1548.12V642.2H1548.90V642.8H1549.68V641.9H1550.46V641.0H1551.24V640.5H1552.02V639.4H1552.80V636.0H1553.58V634.2H1554.36V632.1H1555.14V629.7H1555.92V626.3H1556.70V625.7H1557.48V622.1H1558.26V619.3H1559.04V616.9H1559.82V614.6H1560.60V612.2H1561.38V608.6H1562.16V609.8H1563.72V609.4H1564.50V611.3H1565.28V610.9H1566.06V610.0H1566.84V610.8H1567.62V611.7H1568.40V613.7H1569.18V624.1H1569.96V632.3H1570.74V657.1H1571.52V691.9H1572.30V687.2H1573.08V681.2H1573.86V678.5H1574.64V676.2H1575.42V674.9H1576.20V672.3H1576.98V670.2H1577.76V668.6H1578.54V671.6H1579.32V672.5H1580.10V672.1H1580.88V670.0H1581.66V667.4H1582.44V665.6H1583.22V662.2H1584.00V929.0Z" fill="#ff1ab8"/><path d="M545.95 929.0V928.7H546.73V928.4H547.51V928.1H548.29V927.8H549.07V927.6H549.85V927.3H550.63V927.0H551.41V926.7H552.19V926.4H552.97V926.1H553.75V925.8H554.53V925.5H555.31V925.3H556.09V924.9H556.87V924.8H557.65V924.5H558.43V924.1H559.21V924.2H559.99V923.9H560.77V923.6H561.55V923.5H562.33V923.2H563.11V922.9H565.45V922.8H566.23V922.5H567.01V922.1H567.79V921.7H568.57V921.5H569.35V921.0H570.13V920.5H570.91V919.9H571.69V919.6H572.47V919.2H573.25V918.8H574.03V918.5H574.81V918.0H575.59V917.5H576.37V917.0H577.15V916.4H577.93V915.8H578.71V915.4H579.49V915.0H581.05V914.4H581.83V914.5H582.61V914.3H583.39V913.8H584.17V913.5H584.95V913.3H585.73V913.1H586.51V912.7H587.29V912.5H588.07V912.2H588.85V911.8H589.63V912.0H590.41V911.9H591.19V911.7H591.97V911.3H592.75V911.0H593.53V910.9H594.31V910.4H595.09V910.3H595.87V909.6H596.65V909.1H597.43V908.6H598.21V908.3H598.99V907.6H599.77V907.3H600.55V907.0H601.33V906.7H602.89V906.4H603.67V905.6H604.45V905.3H605.23V904.8H606.01V904.2H606.79V904.4H607.57V903.9H608.35V903.4H609.12V903.2H609.90V903.1H610.68V902.7H612.24V903.0H613.80V902.6H614.58V902.5H615.36V902.7H616.14V901.7H616.92V901.6H617.70V901.4H618.48V901.7H619.26V901.8H620.04V901.9H620.82V901.1H621.60V901.6H622.38V901.1H623.16V901.4H623.94V901.0H624.72V901.3H625.50V900.8H626.28V900.3H627.06V900.4H627.84V899.7H628.62V895.4H629.40V891.2H630.18V889.1H630.96V887.9H631.74V886.6H632.52V885.5H633.30V884.3H634.08V883.0H634.86V881.9H635.64V880.7H636.42V879.3H637.20V876.3H637.98V862.4H638.76V838.9H639.54V808.2H640.32V794.1H641.10V780.4H641.88V772.3H642.66V762.5H643.44V754.7H644.22V745.3H645.00V737.0H645.78V728.6H646.56V722.6H647.34V720.7H648.12V718.2H648.90V716.5H649.68V715.1H650.46V712.5H651.24V709.8H652.02V703.3H652.80V698.3H653.58V691.5H654.36V686.4H655.14V666.3H655.92V648.5H656.70V674.4H657.48V684.2H658.26V688.8H659.04V695.7H659.82V700.9H660.60V692.4H661.38V682.3H662.16V671.0H662.94V661.1H663.72V650.5H664.50V639.1H665.28V629.5H666.06V618.6H666.84V609.6H667.62V602.1H668.40V602.9H669.18V600.0H669.96V601.1H670.74V600.6H671.52V601.2H672.30V601.6H673.08V604.9H673.86V607.5H674.64V613.3H675.42V613.2H676.20V609.4H676.98V606.3H677.76V606.7H678.54V618.0H679.32V630.7H680.10V641.4H680.88V644.3H681.66V646.6H682.44V652.4H683.22V653.2H684.00V657.1H684.78V658.5H685.56V662.7H686.34V664.9H687.12V668.4H687.89V667.7H688.67V662.9H689.45V665.0H690.23V668.2H691.01V671.2H691.79V674.6H692.57V676.5H693.35V679.2H694.13V682.1H694.91V685.0H695.69V687.1H696.47V687.5H697.25V688.1H698.03V687.7H698.81V687.6H699.59V689.2H700.37V682.3H701.15V663.9H701.93V646.6H703.49V649.1H704.27V652.5H705.05V653.9H705.83V652.0H706.61V649.4H707.39V647.3H708.17V645.0H708.95V642.2H709.73V638.8H710.51V636.5H711.29V634.0H712.07V632.7H712.85V631.9H713.63V628.6H714.41V626.6H715.19V622.8H715.97V619.2H716.75V617.1H717.53V612.4H718.31V609.2H719.09V606.5H719.87V604.1H720.65V600.8H721.43V597.7H722.21V593.7H722.99V590.5H723.77V586.4H724.55V583.2H725.33V578.4H726.11V577.1H726.89V576.2H727.67V575.8H728.45V575.0H729.23V576.7H730.01V575.3H730.79V575.2H731.57V574.8H732.35V574.1H733.13V574.4H733.91V573.6H734.69V572.5H735.47V571.0H736.25V567.5H737.03V565.2H737.81V560.0H738.59V556.1H739.37V552.9H740.15V550.0H740.93V549.7H741.71V550.5H742.49V554.2H743.27V559.5H744.05V561.4H744.83V567.0H745.61V568.8H746.39V568.0H747.17V566.0H747.95V566.6H748.73V565.8H749.51V564.3H750.29V563.9H751.07V564.5H751.85V564.9H752.63V567.2H753.41V568.4H754.19V569.4H754.97V571.3H755.75V573.1H756.53V573.8H757.31V576.3H758.09V580.7H758.87V589.6H759.65V599.5H760.43V604.6H761.21V597.7H761.99V590.5H762.77V582.2H763.55V575.6H764.33V570.4H765.10V565.7H765.88V563.3H766.66V560.2H767.44V559.1H768.22V555.5H769.00V553.2H769.78V550.8H770.56V549.5H771.34V546.1H772.12V542.9H772.90V540.5H773.68V538.0H774.46V534.1H775.24V530.4H776.02V530.7H776.80V527.0H777.58V525.0H778.36V524.0H779.14V522.2H779.92V521.5H780.70V520.7H781.48V519.0H782.26V529.8H783.04V550.8H783.82V587.7H784.60V593.4H785.38V585.4H786.16V579.9H786.94V573.0H787.72V566.1H788.50V559.5H789.28V554.8H790.06V547.8H790.84V544.7H791.62V542.0H792.40V540.3H793.18V539.0H793.96V541.4H794.74V545.6H795.52V547.2H796.30V547.7H797.08V549.8H797.86V551.8H798.64V551.0H799.42V548.3H800.20V545.2H800.98V542.9H801.76V539.1H802.54V537.4H803.32V535.4H804.10V539.9H804.88V543.2H805.66V546.1H806.44V545.7H807.22V541.2H808.00V538.2H808.78V536.4H809.56V535.2H810.34V538.9H811.12V541.4H811.90V546.1H812.68V544.9H813.46V539.7H814.24V535.9H815.02V533.8H815.80V539.5H816.58V537.9H817.36V533.9H818.14V542.3H818.92V550.2H819.70V543.3H820.48V537.5H821.26V534.4H822.04V534.9H822.82V531.6H823.60V527.0H824.38V524.9H825.16V521.3H825.94V517.6H826.72V513.8H827.50V511.1H828.28V506.7H829.06V503.9H829.84V506.2H830.62V510.9H831.40V513.5H832.18V515.4H832.96V514.8H833.74V513.5H834.52V512.5H835.30V511.3H836.08V514.8H836.86V516.7H837.64V518.2H838.42V517.4H839.20V519.9H839.98V522.0H840.76V523.0H841.54V523.6H842.32V526.7H843.09V527.7H843.87V527.3H844.65V528.4H845.43V529.2H846.21V532.0H846.99V533.1H847.77V536.8H848.55V550.6H849.33V566.8H850.11V584.0H850.89V596.8H851.67V611.9H852.45V611.5H853.23V609.6H854.01V608.9H854.79V608.6H855.57V606.3H856.35V606.1H857.13V604.6H857.91V603.1H858.69V598.6H859.47V595.4H860.25V588.7H861.03V585.4H861.81V580.8H862.59V575.9H863.37V572.9H864.15V569.7H864.93V578.5H865.71V591.8H866.49V604.6H867.27V614.4H868.05V623.8H868.83V630.1H869.61V639.1H870.39V645.8H871.17V653.1H871.95V660.3H872.73V667.1H873.51V674.2H874.29V681.0H875.07V687.6H875.85V692.6H876.63V697.8H877.41V704.1H878.19V710.1H878.97V710.5H879.75V711.0H880.53V709.5H881.31V709.9H882.09V709.6H883.65V709.4H884.43V709.7H885.21V709.5H885.99V710.1H886.77V709.7H887.55V708.3H888.33V709.2H889.11V707.3H889.89V704.6H890.67V702.1H891.45V700.7H892.23V697.7H893.01V694.5H893.79V692.0H894.57V689.7H895.35V686.7H896.13V685.9H896.91V683.1H897.69V680.8H898.47V675.8H899.25V673.0H900.03V667.5H900.81V662.9H901.59V657.6H902.37V653.1H903.15V648.0H903.93V648.9H904.71V646.4H905.49V645.6H906.27V644.4H907.05V642.2H907.83V642.0H908.61V641.9H909.39V639.9H910.95V638.8H911.73V637.9H912.51V637.8H913.29V636.8H914.07V637.8H914.85V638.5H915.63V638.1H916.41V630.3H917.19V621.3H917.97V610.6H918.75V601.3H919.53V592.4H920.31V589.5H921.08V589.0H921.86V587.5H922.64V586.3H923.42V584.5H924.20V583.8H924.98V583.4H925.76V586.6H926.54V589.3H927.32V592.9H928.10V603.4H928.88V611.8H929.66V618.9H930.44V623.9H931.22V630.1H932.00V639.4H932.78V662.3H933.56V691.4H934.34V734.9H935.12V756.6H935.90V756.8H936.68V757.7H937.46V757.9H938.24V758.7H939.02V758.2H939.80V758.9H940.58V758.6H941.36V758.2H942.14V757.6H942.92V759.7H944.48V760.2H945.26V762.1H946.04V767.2H946.82V771.0H947.60V774.9H948.38V779.4H949.16V769.5H949.94V756.6H950.72V744.9H951.50V732.5H952.28V720.4H953.06V708.7H953.84V700.9H954.62V699.0H955.40V695.3H956.18V691.4H956.96V690.9H957.74V699.4H958.52V707.8H959.30V714.7H960.08V727.4H960.86V747.2H961.64V766.6H962.42V782.6H963.20V785.2H963.98V787.0H964.76V790.0H965.54V790.1H966.32V791.3H967.10V791.4H967.88V790.3H968.66V791.2H969.44V791.7H970.22V791.4H971.00V791.2H971.78V790.8H972.56V791.6H973.34V792.2H974.12V791.8H974.90V792.2H975.68V795.1H976.46V797.6H977.24V801.1H978.02V803.8H978.80V807.5H979.58V809.4H980.36V811.2H981.14V813.9H981.92V816.5H982.70V818.9H983.48V820.6H984.26V819.9H985.04V816.6H985.82V813.3H986.60V810.1H987.38V807.5H988.16V804.4H988.94V804.8H989.72V809.4H990.50V814.4H991.28V818.8H992.06V819.1H992.84V819.4H993.62V821.0H994.40V820.6H995.18V820.1H995.96V820.5H996.74V819.6H997.52V819.7H998.30V818.3H999.07V817.4H999.85V817.0H1000.63V805.7H1001.41V792.0H1002.19V779.2H1002.97V772.8H1003.75V768.6H1004.53V766.4H1005.31V761.5H1006.09V758.0H1006.87V753.1H1007.65V751.4H1008.43V754.9H1009.21V757.7H1009.99V761.0H1010.77V764.8H1011.55V768.0H1012.33V772.1H1013.11V776.5H1013.89V778.8H1014.67V782.9H1015.45V785.5H1016.23V786.8H1017.01V787.5H1017.79V789.2H1018.57V790.0H1020.13V789.2H1020.91V788.8H1021.69V786.3H1022.47V786.2H1023.25V785.6H1024.03V783.9H1024.81V783.7H1025.59V783.4H1026.37V782.1H1027.15V780.6H1027.93V780.2H1028.71V781.1H1029.49V780.8H1031.05V781.5H1031.83V784.9H1032.61V790.3H1033.39V795.6H1034.17V800.5H1034.95V805.2H1035.73V807.0H1036.51V808.8H1037.29V810.3H1038.07V811.3H1038.85V813.2H1039.63V814.5H1040.41V814.8H1041.19V815.5H1041.97V815.1H1042.75V816.7H1043.53V816.3H1044.31V818.3H1045.09V819.3H1045.87V821.1H1046.65V824.3H1047.43V823.3H1048.21V822.1H1048.99V821.4H1049.77V821.0H1050.55V822.5H1051.33V823.4H1052.11V824.5H1052.89V825.9H1053.67V826.7H1054.45V829.1H1055.23V828.7H1056.01V830.0H1057.57V831.3H1058.35V832.5H1059.13V832.9H1059.91V834.2H1060.69V834.9H1061.47V835.1H1062.25V833.2H1063.03V831.8H1063.81V830.4H1064.59V828.4H1065.37V824.3H1066.15V820.9H1066.93V817.7H1067.71V815.6H1068.49V813.8H1069.27V822.6H1070.05V831.5H1070.83V836.5H1071.61V841.3H1072.39V842.8H1073.17V842.5H1073.95V843.5H1074.73V845.4H1075.51V849.1H1076.29V849.4H1077.07V849.1H1077.84V849.0H1078.62V847.8H1079.40V851.5H1080.18V854.7H1080.96V856.1H1081.74V857.6H1082.52V858.4H1083.30V859.1H1084.08V860.0H1084.86V860.7H1085.64V861.0H1086.42V861.7H1087.20V861.4H1087.98V862.3H1088.76V861.9H1089.54V862.7H1090.32V863.0H1091.10V863.1H1091.88V862.9H1092.66V863.2H1093.44V863.0H1094.22V862.6H1095.00V862.9H1096.56V862.7H1097.34V864.2H1098.12V864.3H1098.90V865.4H1099.68V865.1H1100.46V865.4H1102.80V865.1H1103.58V865.5H1104.36V865.4H1105.92V864.6H1106.70V864.7H1107.48V864.4H1108.26V864.7H1109.04V864.3H1109.82V865.4H1110.60V865.0H1111.38V864.8H1112.16V865.6H1112.94V866.1H1113.72V866.3H1114.50V866.8H1115.28V866.3H1116.06V865.5H1116.84V865.8H1117.62V866.5H1119.18V866.6H1119.96V866.2H1120.74V866.6H1121.52V866.2H1122.30V865.3H1123.08V864.8H1124.64V864.7H1125.42V864.6H1126.20V864.4H1126.98V864.9H1127.76V863.9H1128.54V864.1H1129.32V863.4H1130.10V862.6H1130.88V862.4H1131.66V862.8H1132.44V861.8H1133.22V861.5H1134.00V861.8H1134.78V861.6H1135.56V860.8H1137.12V859.4H1137.90V860.4H1138.68V859.8H1139.46V859.1H1140.24V858.5H1141.02V857.7H1141.80V856.9H1142.58V856.1H1143.36V854.6H1144.14V854.8H1144.92V853.5H1145.70V853.2H1146.48V852.5H1147.26V852.2H1148.04V853.7H1148.82V855.1H1149.60V856.0H1150.38V855.7H1151.16V854.0H1151.94V851.0H1152.72V850.2H1153.50V851.0H1154.28V850.2H1155.06V849.3H1155.83V849.9H1156.61V850.2H1157.39V850.4H1158.17V850.3H1158.95V850.0H1159.73V850.4H1160.51V850.3H1161.29V850.9H1162.07V851.1H1162.85V851.6H1163.63V851.9H1164.41V853.0H1165.19V853.6H1165.97V853.9H1166.75V854.3H1167.53V854.4H1168.31V854.7H1169.09V854.9H1169.87V854.2H1170.65V853.6H1171.43V849.1H1172.21V842.6H1172.99V840.4H1173.77V843.0H1174.55V845.2H1175.33V844.6H1176.11V844.0H1176.89V843.1H1177.67V843.2H1178.45V842.3H1179.23V842.7H1180.01V842.8H1181.57V844.0H1183.13V844.3H1183.91V844.4H1184.69V845.3H1185.47V845.4H1186.25V844.9H1187.03V845.6H1187.81V845.3H1188.59V844.3H1189.37V843.1H1190.15V842.8H1190.93V842.7H1191.71V842.2H1192.49V841.7H1193.27V841.8H1194.05V841.3H1194.83V840.3H1195.61V839.9H1196.39V838.9H1197.17V838.2H1197.95V836.9H1198.73V837.7H1199.51V837.3H1200.29V838.6H1201.07V839.5H1201.85V840.1H1202.63V841.4H1203.41V842.2H1204.19V843.5H1204.97V843.8H1205.75V843.1H1208.09V842.5H1208.87V842.1H1210.43V842.8H1211.21V843.0H1211.99V843.8H1212.77V843.6H1213.55V842.4H1214.33V843.5H1215.11V842.6H1215.89V842.2H1216.67V842.4H1218.23V841.8H1219.01V841.3H1219.79V840.8H1220.57V841.0H1221.35V840.0H1222.13V840.2H1222.91V840.1H1223.69V839.9H1224.47V839.7H1225.25V839.2H1226.03V839.0H1226.81V837.9H1227.59V837.3H1228.37V837.1H1229.15V836.9H1229.93V837.3H1230.71V837.0H1231.49V836.3H1232.27V836.7H1233.05V835.8H1233.82V835.7H1234.60V835.3H1235.38V835.4H1236.16V834.6H1236.94V833.8H1237.72V833.4H1238.50V833.6H1239.28V834.4H1240.06V834.9H1240.84V835.9H1241.62V836.2H1242.40V837.2H1243.18V837.6H1244.74V838.5H1245.52V839.3H1246.30V838.9H1247.08V838.2H1247.86V837.1H1248.64V835.1H1249.42V834.3H1250.20V833.8H1250.98V832.0H1251.76V831.6H1252.54V832.3H1253.32V832.5H1254.88V832.3H1255.66V832.2H1256.44V831.9H1257.22V831.8H1258.00V831.7H1258.78V831.6H1259.56V831.9H1260.34V832.8H1261.12V832.3H1261.90V832.1H1262.68V832.4H1263.46V831.9H1264.24V832.3H1265.80V831.1H1266.58V831.0H1267.36V830.7H1268.14V830.1H1268.92V829.6H1269.70V829.7H1270.48V830.9H1271.26V830.7H1272.04V831.1H1272.82V831.8H1273.60V831.7H1274.38V831.5H1275.16V832.4H1275.94V832.9H1276.72V831.9H1277.50V833.1H1278.28V833.5H1279.06V833.1H1279.84V833.2H1280.62V834.6H1281.40V835.2H1282.18V836.7H1282.96V837.8H1283.74V838.3H1284.52V838.8H1285.30V840.0H1286.08V840.4H1286.86V840.7H1287.64V839.8H1288.42V841.3H1289.20V840.9H1289.98V841.8H1290.76V842.1H1291.54V841.8H1292.32V841.5H1293.10V841.2H1293.88V841.5H1294.66V841.9H1295.44V842.2H1296.22V844.7H1297.00V845.4H1297.78V845.5H1298.56V846.4H1299.34V846.9H1300.12V847.2H1300.90V847.4H1301.68V847.7H1302.46V847.2H1303.24V847.1H1304.02V845.9H1304.80V846.7H1305.58V846.0H1306.36V846.2H1307.14V845.6H1309.48V845.3H1310.26V844.8H1311.03V844.6H1311.81V844.8H1312.59V844.6H1313.37V844.1H1314.15V845.2H1314.93V844.2H1315.71V844.1H1316.49V843.2H1317.27V842.5H1318.83V842.1H1319.61V842.9H1320.39V842.0H1321.17V842.6H1321.95V842.1H1322.73V842.2H1323.51V843.1H1324.29V842.3H1325.07V841.9H1325.85V841.5H1326.63V842.0H1327.41V842.1H1328.19V842.7H1328.97V841.6H1329.75V841.5H1330.53V842.3H1331.31V842.8H1332.09V843.7H1332.87V843.1H1333.65V842.5H1334.43V843.0H1335.21V842.4H1335.99V842.3H1336.77V842.6H1337.55V841.8H1338.33V842.9H1339.11V842.8H1340.67V842.5H1341.45V842.4H1342.23V842.2H1343.79V842.1H1344.57V841.3H1345.35V841.0H1346.13V840.1H1346.91V839.1H1347.69V837.9H1348.47V837.3H1349.25V836.0H1350.03V835.1H1350.81V834.2H1351.59V834.0H1352.37V833.3H1353.15V834.3H1353.93V833.6H1354.71V832.4H1355.49V832.2H1356.27V831.7H1357.05V830.6H1357.83V831.1H1358.61V831.4H1359.39V831.5H1360.17V831.0H1360.95V830.9H1361.73V831.3H1362.51V830.9H1363.29V829.9H1364.07V829.4H1364.85V829.5H1365.63V828.6H1366.41V828.1H1367.19V828.5H1367.97V827.3H1368.75V826.4H1370.31V826.7H1371.09V825.5H1371.87V824.7H1372.65V824.0H1373.43V825.0H1374.21V822.6H1374.99V823.4H1375.77V822.0H1376.55V821.4H1377.33V821.1H1378.89V821.2H1379.67V820.0H1381.23V820.2H1382.01V817.5H1382.79V817.8H1383.57V817.0H1384.35V817.7H1385.13V816.3H1385.91V815.8H1386.69V815.3H1387.47V815.6H1389.03V814.8H1389.80V815.3H1390.58V814.8H1391.36V814.0H1392.14V814.5H1392.92V814.1H1393.70V813.9H1394.48V812.7H1395.26V812.4H1396.04V812.3H1396.82V811.2H1397.60V811.6H1398.38V811.2H1399.16V810.6H1399.94V811.3H1400.72V810.8H1401.50V811.0H1402.28V810.3H1403.06V809.5H1403.84V810.4H1404.62V810.0H1405.40V810.4H1406.18V809.9H1406.96V809.4H1407.74V807.5H1408.52V806.3H1409.30V806.2H1410.08V805.6H1410.86V803.8H1411.64V802.8H1412.42V800.9H1413.20V800.5H1413.98V800.7H1414.76V800.9H1415.54V802.0H1416.32V803.0H1417.10V804.9H1417.88V805.6H1418.66V806.9H1419.44V806.7H1420.22V807.2H1421.00V805.9H1421.78V805.0H1422.56V805.3H1423.34V804.7H1424.12V804.6H1424.90V803.5H1425.68V802.5H1426.46V802.1H1427.24V801.9H1428.02V800.3H1428.80V800.8H1429.58V798.6H1431.14V798.0H1431.92V794.2H1432.70V793.6H1433.48V793.8H1434.26V792.1H1435.04V790.9H1435.82V789.1H1436.60V788.2H1437.38V786.4H1438.16V784.5H1438.94V783.2H1439.72V781.2H1440.50V780.0H1441.28V777.3H1442.06V777.1H1442.84V775.3H1443.62V775.1H1444.40V773.4H1445.18V770.5H1445.96V769.3H1446.74V766.0H1447.52V763.9H1448.30V762.2H1449.08V759.4H1449.86V756.9H1450.64V754.0H1451.42V750.3H1452.20V747.6H1452.98V745.8H1453.76V743.6H1454.54V740.8H1455.32V738.7H1456.10V736.2H1456.88V733.2H1457.66V731.7H1458.44V729.6H1459.22V727.3H1460.00V728.1H1460.78V728.9H1461.56V729.8H1462.34V730.4H1463.12V731.3H1463.90V731.4H1464.68V731.2H1465.46V729.4H1466.24V728.4H1467.02V725.3H1467.79V724.1H1468.57V721.2H1469.35V719.3H1470.13V717.3H1470.91V716.7H1471.69V714.9H1472.47V712.7H1473.25V715.1H1474.03V715.7H1474.81V717.5H1475.59V719.8H1476.37V719.3H1477.15V718.3H1477.93V718.6H1478.71V717.2H1479.49V718.4H1480.27V721.5H1481.05V724.9H1481.83V728.1H1482.61V731.2H1483.39V733.2H1484.17V735.2H1484.95V734.4H1485.73V736.0H1486.51V737.7H1487.29V740.1H1488.07V741.7H1488.85V741.5H1489.63V741.4H1490.41V742.0H1491.19V739.9H1491.97V738.0H1492.75V740.0H1493.53V739.1H1494.31V740.9H1495.09V742.6H1495.87V743.3H1496.65V746.0H1497.43V744.4H1498.21V742.3H1498.99V741.8H1499.77V740.8H1500.55V739.6H1501.33V739.5H1502.11V737.8H1502.89V738.1H1503.67V735.8H1504.45V735.4H1505.23V732.8H1506.01V731.9H1506.79V732.2H1507.57V727.5H1508.35V724.7H1509.13V720.9H1509.91V716.2H1510.69V714.0H1511.47V710.0H1512.25V704.4H1513.03V701.2H1513.81V696.3H1514.59V693.1H1515.37V690.0H1516.15V686.7H1516.93V683.7H1517.71V681.8H1518.49V680.6H1519.27V678.9H1520.05V677.3H1520.83V675.6H1521.61V671.6H1522.39V670.3H1523.17V668.4H1523.95V665.2H1524.73V662.9H1525.51V663.0H1526.29V663.6H1527.07V664.3H1527.85V664.5H1528.63V666.2H1529.41V666.4H1530.19V665.1H1530.97V665.4H1531.75V664.0H1532.53V663.0H1533.31V663.4H1534.09V664.1H1534.87V662.9H1535.65V663.7H1536.43V665.3H1537.21V665.4H1537.99V666.2H1538.77V667.7H1539.55V667.6H1540.33V666.1H1541.11V665.5H1541.89V662.3H1542.67V660.0H1543.45V657.5H1544.23V655.9H1545.01V656.2H1545.78V658.5H1546.56V661.2H1547.34V664.8H1548.12V666.7H1548.90V671.1H1549.68V672.7H1550.46V671.2H1551.24V671.8H1552.02V670.7H1552.80V668.4H1553.58V666.9H1554.36V663.3H1555.14V659.6H1555.92V655.7H1556.70V654.5H1557.48V650.3H1558.26V647.2H1559.04V645.0H1559.82V642.8H1560.60V640.7H1561.38V637.5H1562.16V636.0H1562.94V634.3H1563.72V633.1H1565.28V634.1H1566.06V634.5H1566.84V636.9H1567.62V639.3H1568.40V642.7H1569.18V654.7H1569.96V665.1H1570.74V681.2H1571.52V701.7H1572.30V702.4H1573.08V702.7H1573.86V700.6H1574.64V696.0H1575.42V692.7H1576.20V690.4H1576.98V689.6H1577.76V687.5H1578.54V688.7H1579.32V688.9H1580.10V689.1H1580.88V689.0H1581.66V688.2H1582.44V687.8H1583.22V686.0H1584.00V929.0Z" fill="#1afcaa"/></g>
 <rect x="77" y="90" width="1507" height="839" fill="url(#stripes)" clip-path="url(#cp)"/>
 <g clip-path="url(#cp)" opacity="0.44"><text x="711.7 724.9 744.3 762.2 781.8 795.6 812.6 826.0 845.2 857.5 888.8 898.4 916.4 936.0" y="523.8" font-size="34" font-weight="400" stroke-width="0.9" fill="#494949" stroke="#494949">token terminal</text><rect x="945" y="520.3" width="14.5" height="3.7" fill="#494949"/></g>
 <text transform="translate(26.5,512) rotate(-90)" text-anchor="middle" font-size="10" font-weight="700" fill="#9a9a9a" stroke="#9a9a9a" stroke-width="0.35" style="font-weight:700">Active loans</text>
</svg>
<span class="t" style="left:14.82px;top:17px;font-size:10px;font-weight:400;letter-spacing:0.271px;color:#a6a6a6;-webkit-text-stroke:0.55px #a6a6a6;">Data</span><span class="t" style="left:60.80px;top:17px;font-size:10px;font-weight:400;letter-spacing:0.425px;color:#a6a6a6;-webkit-text-stroke:0.55px #a6a6a6;">Chart</span><span class="t" style="left:118.32px;top:17px;font-size:10px;font-weight:400;letter-spacing:0.272px;color:#a6a6a6;-webkit-text-stroke:0.55px #a6a6a6;">Key metrics</span><span class="t" style="left:1155.40px;top:17px;font-size:10px;font-weight:400;letter-spacing:0.132px;color:#a6a6a6;-webkit-text-stroke:0.55px #a6a6a6;">7D</span><span class="t" style="left:1179.10px;top:17px;font-size:10px;font-weight:400;letter-spacing:0.950px;color:#a6a6a6;-webkit-text-stroke:0.55px #a6a6a6;">30D</span><span class="t" style="left:1209.70px;top:17px;font-size:10px;font-weight:400;letter-spacing:1.050px;color:#a6a6a6;-webkit-text-stroke:0.55px #a6a6a6;">90D</span><span class="t" style="left:1239.78px;top:17px;font-size:10px;font-weight:400;letter-spacing:0.272px;color:#a6a6a6;-webkit-text-stroke:0.55px #a6a6a6;">180D</span><span class="t" style="left:1275.30px;top:17px;font-size:10px;font-weight:400;letter-spacing:-0.250px;color:#a6a6a6;-webkit-text-stroke:0.55px #a6a6a6;">YTD</span><span class="t" style="left:1305.50px;top:17px;font-size:10px;font-weight:400;letter-spacing:0.667px;color:#a6a6a6;-webkit-text-stroke:0.55px #a6a6a6;">365D</span><span class="t" style="left:1342.12px;top:17px;font-size:10px;font-weight:700;letter-spacing:0.289px;color:#f0f0f0;">MAX</span><span class="t" style="left:1384.02px;top:17px;font-size:10px;font-weight:700;letter-spacing:0.000px;color:#f0f0f0;">D</span><span class="t" style="left:1402.59px;top:17px;font-size:10px;font-weight:400;letter-spacing:0.000px;color:#a6a6a6;-webkit-text-stroke:0.55px #a6a6a6;">W</span><span class="t" style="left:1423.02px;top:17px;font-size:10px;font-weight:400;letter-spacing:0.000px;color:#a6a6a6;-webkit-text-stroke:0.55px #a6a6a6;">M</span><span class="t" style="left:1442.00px;top:17px;font-size:10px;font-weight:400;letter-spacing:0.000px;color:#a6a6a6;-webkit-text-stroke:0.55px #a6a6a6;">Q</span><span class="t" style="left:1516.80px;top:17px;font-size:10px;font-weight:400;letter-spacing:0.197px;color:#b0b0b0;-webkit-text-stroke:0.55px #b0b0b0;">Open in studio</span><span class="t" style="left:633.13px;top:65px;font-size:10.5px;font-weight:700;letter-spacing:-0.393px;color:#e4e4e4;">Aave</span><span class="t" style="left:691.55px;top:65px;font-size:10.5px;font-weight:700;letter-spacing:-0.504px;color:#e4e4e4;">Compound</span><span class="t" style="left:777.90px;top:65px;font-size:10.5px;font-weight:700;letter-spacing:-0.407px;color:#e4e4e4;">Venus</span><span class="t" style="left:841.98px;top:65px;font-size:10.5px;font-weight:700;letter-spacing:-0.256px;color:#e4e4e4;">Morpho</span><span class="t" style="left:912.86px;top:65px;font-size:10.5px;font-weight:700;letter-spacing:-0.220px;color:#e4e4e4;">Spark Protocol</span><span class="t" style="left:52.54px;top:919px;font-size:10.5px;font-weight:700;letter-spacing:0.200px;color:#dcdcdc;">$0</span><span class="t" style="left:46.10px;top:850px;font-size:10.5px;font-weight:700;letter-spacing:0.200px;color:#dcdcdc;">$2b</span><span class="t" style="left:46.10px;top:781px;font-size:10.5px;font-weight:700;letter-spacing:0.200px;color:#dcdcdc;">$4b</span><span class="t" style="left:46.10px;top:711px;font-size:10.5px;font-weight:700;letter-spacing:0.200px;color:#dcdcdc;">$6b</span><span class="t" style="left:46.10px;top:642px;font-size:10.5px;font-weight:700;letter-spacing:0.200px;color:#dcdcdc;">$8b</span><span class="t" style="left:40.10px;top:572px;font-size:10.5px;font-weight:700;letter-spacing:0.200px;color:#dcdcdc;">$10b</span><span class="t" style="left:40.10px;top:502px;font-size:10.5px;font-weight:700;letter-spacing:0.200px;color:#dcdcdc;">$12b</span><span class="t" style="left:40.10px;top:433px;font-size:10.5px;font-weight:700;letter-spacing:0.200px;color:#dcdcdc;">$14b</span><span class="t" style="left:40.10px;top:363px;font-size:10.5px;font-weight:700;letter-spacing:0.200px;color:#dcdcdc;">$16b</span><span class="t" style="left:40.10px;top:294px;font-size:10.5px;font-weight:700;letter-spacing:0.200px;color:#dcdcdc;">$18b</span><span class="t" style="left:40.10px;top:224px;font-size:10.5px;font-weight:700;letter-spacing:0.200px;color:#dcdcdc;">$20b</span><span class="t" style="left:40.10px;top:155px;font-size:10.5px;font-weight:700;letter-spacing:0.200px;color:#dcdcdc;">$22b</span><span class="t" style="left:40.10px;top:85px;font-size:10.5px;font-weight:700;letter-spacing:0.200px;color:#dcdcdc;">$24b</span><span class="t" style="left:151.54px;top:932px;font-size:10.5px;font-weight:700;letter-spacing:-0.419px;color:#dcdcdc;">Sep '19</span><span class="t" style="left:246.55px;top:932px;font-size:10.5px;font-weight:700;letter-spacing:-0.085px;color:#dcdcdc;">Jan '20</span><span class="t" style="left:338.93px;top:932px;font-size:10.5px;font-weight:700;letter-spacing:0.135px;color:#dcdcdc;">May '20</span><span class="t" style="left:436.06px;top:932px;font-size:10.5px;font-weight:700;letter-spacing:-0.127px;color:#dcdcdc;">Sep '20</span><span class="t" style="left:532.40px;top:932px;font-size:10.5px;font-weight:700;letter-spacing:-0.321px;color:#dcdcdc;">Jan '21</span><span class="t" style="left:624.18px;top:932px;font-size:10.5px;font-weight:700;letter-spacing:-0.127px;color:#dcdcdc;">May '21</span><span class="t" style="left:721.61px;top:932px;font-size:10.5px;font-weight:700;letter-spacing:-0.344px;color:#dcdcdc;">Sep '21</span><span class="t" style="left:816.55px;top:932px;font-size:10.5px;font-weight:700;letter-spacing:-0.098px;color:#dcdcdc;">Jan '22</span><span class="t" style="left:908.23px;top:932px;font-size:10.5px;font-weight:700;letter-spacing:0.119px;color:#dcdcdc;">May '22</span><span class="t" style="left:1005.66px;top:932px;font-size:10.5px;font-weight:700;letter-spacing:-0.127px;color:#dcdcdc;">Sep '22</span><span class="t" style="left:1101.25px;top:932px;font-size:10.5px;font-weight:700;letter-spacing:-0.094px;color:#dcdcdc;">Jan '23</span><span class="t" style="left:1192.93px;top:932px;font-size:10.5px;font-weight:700;letter-spacing:0.123px;color:#dcdcdc;">May '23</span><span class="t" style="left:1290.26px;top:932px;font-size:10.5px;font-weight:700;letter-spacing:-0.127px;color:#dcdcdc;">Sep '23</span><span class="t" style="left:1386.05px;top:932px;font-size:10.5px;font-weight:700;letter-spacing:-0.105px;color:#dcdcdc;">Jan '24</span><span class="t" style="left:1478.33px;top:932px;font-size:10.5px;font-weight:700;letter-spacing:0.039px;color:#dcdcdc;">May '24</span>
</div></body></html>
